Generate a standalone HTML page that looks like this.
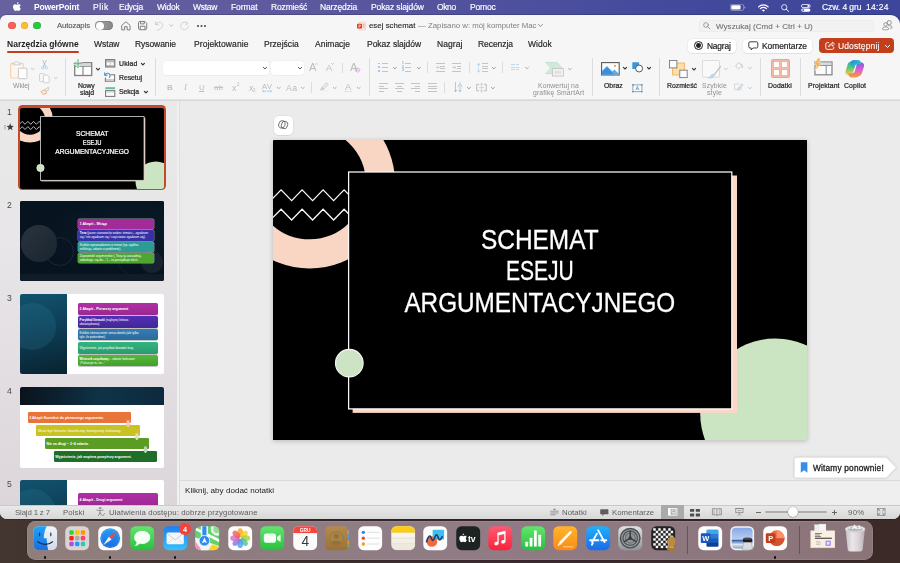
<!DOCTYPE html>
<html lang="pl">
<head>
<meta charset="utf-8">
<title>esej schemat</title>
<style>
*{box-sizing:border-box;margin:0;padding:0}
html,body{width:900px;height:563px;overflow:hidden}
body{position:relative;font-family:"Liberation Sans",sans-serif;background:#3a2a2c;color:#222}
.a{position:absolute}
.t{position:absolute;white-space:nowrap;line-height:1;will-change:transform}
svg{position:absolute;overflow:visible;will-change:transform}
#wall{left:0;top:0;width:900px;height:563px;background:linear-gradient(90deg,#43352f 0%,#3c2d2d 30%,#3a2a30 60%,#3b2a28 100%)}
#menubar{left:0;top:0;width:900px;height:26px;background:linear-gradient(90deg,#67619f 0%,#5f5a9f 30%,#4f519e 55%,#434a9c 75%,#3d469b 100%)}
#win{left:0;top:15px;width:900.2px;height:504px;background:#f6f6f6;border-radius:6px 9px 7px 7px;overflow:hidden;box-shadow:0 0 0 0.5px rgba(0,0,0,.35)}
#ribbonline{left:0;top:84.2px;width:900px;height:1.4px;background:linear-gradient(#e6e6e6,#d4d4d4)}
#leftpane{left:0;top:85.5px;width:177px;height:404.5px;background:linear-gradient(180deg,#e9e9e9 0%,#e8e6e8 35%,#e2dde1 70%,#dcd6db 100%)}
#panediv{left:177px;top:85.5px;width:3.2px;height:404.5px;background:#f1f1f1;border-right:0.6px solid #dedede}
#main{left:180.2px;top:85.5px;width:720px;height:380.5px;background:#ebebeb}
#notes{left:180.2px;top:465px;width:720px;height:25px;background:#efefef;border-top:1px solid #dadada}
#status{left:0;top:489.6px;width:900px;height:15px;background:linear-gradient(#e9e9e9 0%,#e2e2e2 40%,#d6d6d6 100%);border-top:0.8px solid #c9c9c9}
.vd{position:absolute;width:1px;background:#dadada}
.wbox{position:absolute;background:#fff;border-radius:3px;box-shadow:0 0 0 0.5px rgba(0,0,0,.07),0 0.4px 0.7px rgba(0,0,0,.05)}
.thumb{position:absolute;left:20px;width:144px;height:81px;overflow:hidden;border-radius:1.5px}
#dock{left:27.4px;top:520.8px;width:845.6px;height:38.8px;border-radius:8.5px;background:linear-gradient(90deg,#8f7e7b 0%,#8f7c80 25%,#917c86 50%,#8e7880 75%,#8b7478 100%);box-shadow:inset 0 0 0 0.5px rgba(255,255,255,.18),0 0 0 0.5px rgba(0,0,0,.25)}
.b2{left:58.4px;width:75.2px;height:10.4px;border-radius:1.6px;box-shadow:0 0 0 0.4px rgba(255,255,255,.55)}
.b3{left:58px;width:79.6px;height:11.2px;border-radius:1.8px;box-shadow:0 0.5px 0.8px rgba(0,0,0,.25)}
.b4{width:103.8px;height:10.6px;border-radius:1.2px}
.ar{width:5.6px;height:7px;clip-path:polygon(25% 0,75% 0,75% 50%,100% 50%,50% 100%,0 50%,25% 50%)}
.tt{color:#fff;font-size:3.15px;line-height:4.1px;white-space:nowrap;letter-spacing:-0.02px}
.di{position:absolute;top:526px;width:25px;height:25px;border-radius:6px;overflow:hidden}
.dot{position:absolute;top:556px;width:2.5px;height:2.5px;border-radius:50%;background:#111}
</style>
</head>
<body>
<div class="a" id="wall"></div>
<div class="a" id="menubar"></div>
<!-- apple logo -->
<svg style="left:13px;top:2.300px" width="8" height="9.800" viewBox="0 0 16 19.600"><path d="M11.200 4.700c-1.700 0-2.500 1-3.700 1-1.300 0-2.300-1-3.900-1C1.800 4.700 0 6.500 0 9.600c0 3.800 2.700 8.400 4.800 8.400 1.200 0 1.700-.8 3.300-.8 1.500 0 1.900.8 3.200.8 2 0 3.700-3.200 4.300-5-2.700-1.100-2.900-5.200 0-6.500-.9-1.200-2.500-1.800-4.400-1.800zM10.900 0C9.300.2 7.600 1.800 7.800 4c1.700.1 3.300-1.700 3.100-4z" fill="#fff"/></svg>
<!-- battery -->
<svg style="left:730.400px;top:4.300px" width="15.400" height="6.900" viewBox="0 0 30.800 13.800"><rect x="0.700" y="0.700" width="26.600" height="12.400" rx="3.600" fill="none" stroke="#fff" stroke-opacity=".5" stroke-width="1.400"/><rect x="2.600" y="2.600" width="18.500" height="8.600" rx="2" fill="#fff"/><path d="M28.800 4.600c1.300.4 1.900 1.300 1.900 2.300s-.6 1.900-1.900 2.300z" fill="#fff" fill-opacity=".55"/></svg>
<!-- wifi -->
<svg style="left:758px;top:3.500px" width="10.800" height="7.900" viewBox="0 0 21.600 15.800"><path d="M1.200 5.800a13.500 13.500 0 0 1 19.200 0M4.600 9.300a8.700 8.700 0 0 1 12.400 0" fill="none" stroke="#fff" stroke-width="2.500" stroke-linecap="round"/><path d="M7.700 12.500a4.400 4.400 0 0 1 6.200 0l-3.100 3.200z" fill="#fff"/></svg>
<!-- search -->
<svg style="left:780.600px;top:3.900px" width="8.400" height="7.800" viewBox="0 0 16.800 15.600"><circle cx="6.500" cy="6.500" r="5.300" fill="none" stroke="#fff" stroke-width="1.600"/><path d="M10.500 10.500l5 4.400" stroke="#fff" stroke-width="1.800" stroke-linecap="round"/></svg>
<!-- control center -->
<svg style="left:801px;top:3.600px" width="9.600" height="8" viewBox="0 0 19.200 16"><rect x="0.900" y="0.900" width="17.400" height="6.200" rx="3.100" fill="none" stroke="#fff" stroke-width="1.600"/><circle cx="14.600" cy="4" r="1.900" fill="#fff"/><rect x="0.400" y="8.800" width="18.400" height="6.800" rx="3.400" fill="#fff"/><circle cx="4.300" cy="12.200" r="1.900" fill="#454c9c"/></svg>

<div class="a" id="win">
<div class="a" id="ribbonline"></div>
<div class="a" id="leftpane"></div>
<div class="a" id="panediv"></div>
<div class="a" id="main"></div>
<div class="a" id="notes"></div>
<div class="a" id="status"></div>
</div>
<!-- traffic lights -->
<div class="a" style="left:8.200px;top:21.600px;width:7.600px;height:7.600px;border-radius:50%;background:#fe5f57;box-shadow:inset 0 0 0 0.400px rgba(0,0,0,.18)"></div>
<div class="a" style="left:20.600px;top:21.600px;width:7.600px;height:7.600px;border-radius:50%;background:#febc2e;box-shadow:inset 0 0 0 0.400px rgba(0,0,0,.18)"></div>
<div class="a" style="left:33px;top:21.600px;width:7.600px;height:7.600px;border-radius:50%;background:#28c840;box-shadow:inset 0 0 0 0.400px rgba(0,0,0,.18)"></div>
<!-- autosave toggle -->
<div class="a" style="left:95.300px;top:21.300px;width:17.800px;height:9.100px;border-radius:4.600px;background:linear-gradient(90deg,#a9a9a9,#858585);box-shadow:inset 0 0 0 0.500px rgba(0,0,0,.22)"></div>
<div class="a" style="left:96.100px;top:22px;width:7.700px;height:7.700px;border-radius:50%;background:#fff;box-shadow:0 0 0.800px rgba(0,0,0,.5)"></div>
<!-- home -->
<svg style="left:120.600px;top:20.600px" width="9.800" height="9.600" viewBox="0 0 19.600 19.200" fill="none" stroke="#6a6a6a" stroke-width="1.700" stroke-linejoin="round"><path d="M1.500 8.800L9.800 1.400l8.300 7.400v9H12.400v-6.400H7.200v6.400H1.500z"/></svg>
<!-- save -->
<svg style="left:138px;top:20.800px" width="9.200" height="9.200" viewBox="0 0 18.400 18.400" fill="none" stroke="#6a6a6a" stroke-width="1.700" stroke-linejoin="round"><path d="M1 3.200C1 2 2 1 3.200 1h10.600L17.400 4.600v10.600c0 1.200-1 2.200-2.200 2.200H3.200C2 17.400 1 16.400 1 15.200z"/><path d="M5 1.400v4.400h7.400V1.400M4.400 17v-6.400h9.600V17"/></svg>
<!-- undo (disabled) -->
<svg style="left:155.300px;top:20.600px" width="9" height="10" viewBox="0 0 18 20" fill="none" stroke="#c6c6c6" stroke-width="1.600" stroke-linecap="round" stroke-linejoin="round"><path d="M1.200 1.600v5.600h5.600"/><path d="M1.600 7C4 2.400 10 1 13.600 4.200c4 3.600 2.400 9.400-8.800 14.600"/></svg>
<svg style="left:169px;top:24.300px" width="4.600" height="3" viewBox="0 0 9.200 6" fill="none" stroke="#b8b8b8" stroke-width="1.600" stroke-linecap="round" stroke-linejoin="round"><path d="M1 1l3.600 3.800L8.200 1"/></svg>
<!-- redo (disabled) -->
<svg style="left:180px;top:20.800px" width="9.200" height="9.400" viewBox="0 0 18.400 18.800" fill="none" stroke="#c9c9c9" stroke-width="1.600" stroke-linecap="round" stroke-linejoin="round"><path d="M15.600 5.400A7.800 7.800 0 1 0 17 9.800"/><path d="M11.400 1l4.400 4.200-4.800 2.600"/></svg>
<!-- more -->
<div class="a" style="left:197px;top:25px;width:1.500px;height:1.500px;border-radius:50%;background:#555;box-shadow:3.500px 0 0 #555,7px 0 0 #555"></div>
<!-- doc icon -->
<svg style="left:357px;top:21.700px" width="8.600" height="8" viewBox="0 0 17.200 16"><rect x="3.600" y="0" width="13.600" height="16" rx="1.600" fill="#fbe4dc" stroke="#e9b9a8" stroke-width=".8"/><rect x="0" y="3.400" width="10" height="9.400" rx="1.200" fill="#d24726"/><path d="M3.400 5.400h2.200c2.600 0 2.600 3.400 0 3.400H4.600v2H3.400z M4.600 6.400v1.400h1c.9 0 .9-1.400 0-1.400z" fill="#fff" fill-rule="evenodd"/><path d="M11.600 4.600h3.600M11.600 7.600h3.600M11.600 10.600h3.600" stroke="#e07a5c" stroke-width="1"/></svg>
<svg style="left:538.400px;top:24.400px" width="5" height="3" viewBox="0 0 10 6" fill="none" stroke="#6a6a6a" stroke-width="1.500" stroke-linecap="round" stroke-linejoin="round"><path d="M1 1l4 3.800L9 1"/></svg>
<!-- search box -->
<div class="a" style="left:699.300px;top:19.600px;width:174.600px;height:12.900px;border-radius:3.600px;background:#f2f2f2;box-shadow:inset 0 0 0 0.600px rgba(0,0,0,.045)"></div>
<svg style="left:703px;top:22.400px" width="7.400" height="7.400" viewBox="0 0 14.800 14.800" fill="none" stroke="#7a7a7a" stroke-width="1.400" stroke-linecap="round"><circle cx="6" cy="6" r="4.700"/><path d="M9.600 9.600l4.200 4.200"/></svg>
<!-- people / share presence icon -->
<svg style="left:882px;top:20.200px" width="10.800" height="11" viewBox="0 0 21.600 22" fill="none" stroke="#7a7a7a" stroke-width="1.500"><circle cx="14.400" cy="5.200" r="4.200"/><circle cx="7.200" cy="8.800" r="3.600"/><path d="M1 18.200c0-3 2.800-4.400 6.200-4.400s6.200 1.400 6.200 4.400c0 2-12.400 2-12.400 0z"/><path d="M12.600 11.400c3.600-.6 7.800.6 7.800 3.400 0 1.200-2.200 1.800-4.400 1.900"/></svg>

<div class="a" style="left:6.900px;top:50.700px;width:72.500px;height:2.100px;border-radius:1px;background:#c43e1c"></div>
<div class="wbox" style="left:687.600px;top:38.500px;width:48.200px;height:14.200px;border-radius:3.800px"></div>
<div class="a" style="left:693.600px;top:41px;width:9.300px;height:9.300px;border-radius:50%;border:1.100px solid #1f1f1f"></div>
<div class="a" style="left:695.800px;top:43.200px;width:4.900px;height:4.900px;border-radius:50%;background:#1f1f1f"></div>
<div class="wbox" style="left:743px;top:38.500px;width:69px;height:14.200px;border-radius:3.800px"></div>
<svg style="left:748.2px;top:41.3px" width="10.6" height="9.4" viewBox="0 0 10.6 9.4" ><path d="M2 0.800h6.600c.7 0 1.200.5 1.200 1.200v3.800c0 .7-.5 1.200-1.200 1.200H5.200L3.200 8.800V7H2C1.300 7 .8 6.500.8 5.800V2C.8 1.300 1.300.8 2 .8z" fill="none" stroke="#2a2a2a" stroke-width="0.900" stroke-linejoin="round"/></svg>
<div class="a" style="left:818.700px;top:38px;width:75.200px;height:15.200px;border-radius:4px;background:#c43e1c"></div>
<svg style="left:825px;top:41.2px" width="10" height="9.2" viewBox="0 0 10 9.2" ><path d="M3.600 1.600H2.200C1.400 1.600.800 2.200.800 3v4c0 .8.600 1.400 1.400 1.400h5.200c.8 0 1.400-.6 1.400-1.400V6.200" fill="none" stroke="#fff" stroke-width="0.900" stroke-linecap="round"/><path d="M3.600 6c.2-2.200 1.600-3.400 3.800-3.400V.900L9.600 3.100 7.400 5.300V3.800C5.800 3.800 4.600 4.400 3.600 6z" fill="none" stroke="#fff" stroke-width="0.800" stroke-linejoin="round"/></svg>
<svg style="left:884.50px;top:44.70px" width="5" height="2.8" viewBox="0 0 5 2.8" fill="none" stroke="#fff" stroke-width="1" stroke-linecap="round" stroke-linejoin="round"><path d="M0.400 0.400L2.5 2.4L4.6 0.400"/></svg>
<svg style="left:10.4px;top:59.6px" width="17.6" height="19.4" viewBox="0 0 17.6 19.4" ><rect x="0.700" y="3.400" width="12.600" height="14.600" rx="1" fill="#fdf6ee" stroke="#f7d3ad" stroke-width="1.100"/>
<path d="M3 4.800V3.200h1.600C4.800 1 8.800 1 9 3.200h1.600v1.600z" fill="#f4f4f4" stroke="#c9c9c9" stroke-width="0.800"/>
<rect x="8.400" y="8.200" width="8.600" height="10.500" rx="0.800" fill="#fdfdfd" stroke="#c4c4c4" stroke-width="0.900"/></svg>
<svg style="left:30.80px;top:68.20px" width="3.6" height="2" viewBox="0 0 3.6 2" fill="none" stroke="#c0c0c0" stroke-width="0.9" stroke-linecap="round" stroke-linejoin="round"><path d="M0.400 0.400L1.8 1.6L3.2 0.400"/></svg>
<svg style="left:41px;top:59.6px" width="7" height="9.6" viewBox="0 0 7 9.6" ><path d="M1.800 0.400L4.600 6.600M5.200 0.400L2.400 6.600" stroke="#b4b4b4" stroke-width="0.800" stroke-linecap="round"/><circle cx="1.700" cy="7.800" r="1.200" fill="none" stroke="#a4cbea" stroke-width="0.800"/><circle cx="5.300" cy="7.800" r="1.200" fill="none" stroke="#a4cbea" stroke-width="0.800"/></svg>
<svg style="left:39.4px;top:72.6px" width="10.8" height="10.2" viewBox="0 0 10.8 10.2" ><path d="M0.600 1.400c0-.5.400-.8.800-.8h3.400L6.400 2.200v5.600c0 .4-.3.800-.8.800H1.400c-.4 0-.8-.4-.8-.8z" fill="#f8f8f8" stroke="#c6c6c6" stroke-width="0.800"/><path d="M4.400 2.800c0-.5.400-.8.800-.8h3L10.200 4v5c0 .4-.3.800-.8.800H5.200c-.4 0-.8-.4-.8-.8z" fill="#fbfbfb" stroke="#c6c6c6" stroke-width="0.800"/></svg>
<svg style="left:53.60px;top:77.00px" width="3.6" height="2" viewBox="0 0 3.6 2" fill="none" stroke="#c0c0c0" stroke-width="0.9" stroke-linecap="round" stroke-linejoin="round"><path d="M0.400 0.400L1.8 1.6L3.2 0.400"/></svg>
<svg style="left:40px;top:86.2px" width="10" height="9" viewBox="0 0 10 9" ><path d="M0.800 5.600L4.600 3.600 6.800 7.200 3 8.600z" fill="#fbe3d2" stroke="#f2a97c" stroke-width="0.800" stroke-linejoin="round"/><path d="M5 3.400L7.800 1.600l1.200 2L6.200 5.400z" fill="#f2f2f2" stroke="#bcbcbc" stroke-width="0.700"/><path d="M8.400 1.800L9.400.6" stroke="#bcbcbc" stroke-width="0.800"/></svg>
<div class="a" style="left:65.20px;top:57.5px;width:0.900px;height:38.0px;background:#dcdcdc"></div>
<svg style="left:73px;top:58.8px" width="20" height="17.4" viewBox="0 0 20 17.4" ><rect x="1.700" y="3.700" width="17" height="12.800" fill="#fdfdfd" stroke="#808080" stroke-width="1.300"/><path d="M1.700 7.200h17M10 7.200v9" stroke="#808080" stroke-width="1.100"/><rect x="2.400" y="4.400" width="15.600" height="2.300" fill="#d6d6d6"/><path d="M5 0.200v9M0.400 4.800h9.200" stroke="#f6f6f6" stroke-width="2.600"/><path d="M5 0.200v9M0.400 4.800h9.200" stroke="#33b566" stroke-width="0.950"/></svg>
<svg style="left:96.00px;top:68.10px" width="4" height="2.4" viewBox="0 0 4 2.4" fill="none" stroke="#3a3a3a" stroke-width="1.1" stroke-linecap="round" stroke-linejoin="round"><path d="M0.400 0.400L2.0 2.0L3.6 0.400"/></svg>
<svg style="left:104.8px;top:59.2px" width="10.4" height="8.6" viewBox="0 0 10.4 8.6" ><rect x="0.600" y="0.600" width="9.200" height="7.400" fill="#bdbdbd" stroke="#7c7c7c" stroke-width="1.100"/><rect x="1.800" y="3.400" width="2.900" height="2.600" fill="#fff"/><rect x="5.700" y="3.400" width="2.900" height="2.600" fill="#fff"/></svg>
<svg style="left:141.10px;top:63.15px" width="3.8" height="2.3" viewBox="0 0 3.8 2.3" fill="none" stroke="#333" stroke-width="1.2" stroke-linecap="round" stroke-linejoin="round"><path d="M0.400 0.400L1.9 1.9L3.4 0.400"/></svg>
<svg style="left:104.0px;top:72.0px" width="11.4" height="9.8" viewBox="0 0 11.4 9.8" ><rect x="1.400" y="2.800" width="9.200" height="6.400" fill="#fdfdfd" stroke="#7c7c7c" stroke-width="1.100"/><rect x="2" y="7" width="8" height="1.700" fill="#c9c9c9"/><rect x="0" y="0" width="6.200" height="5.600" fill="#f6f6f6"/><path d="M1.200 3C2 0.900 4.800 0.600 5.800 2.600c.4.900.3 1.900-.3 2.800" fill="none" stroke="#3a96dd" stroke-width="1.100" stroke-linecap="round"/><path d="M0.600 0.800v2.500h2.500" fill="none" stroke="#3a96dd" stroke-width="1" stroke-linecap="round" stroke-linejoin="round"/></svg>
<svg style="left:104.8px;top:86.6px" width="10.4" height="10" viewBox="0 0 10.4 10" ><rect x="0.300" y="0.200" width="9.800" height="2" fill="#62c28e"/><rect x="0.600" y="3.600" width="9.200" height="5.800" fill="#fdfdfd" stroke="#7c7c7c" stroke-width="1.100"/><rect x="1.200" y="4.200" width="8" height="1.300" fill="#cfcfcf"/></svg>
<svg style="left:143.50px;top:90.85px" width="3.8" height="2.3" viewBox="0 0 3.8 2.3" fill="none" stroke="#333" stroke-width="1.2" stroke-linecap="round" stroke-linejoin="round"><path d="M0.400 0.400L1.9 1.9L3.4 0.400"/></svg>
<div class="a" style="left:155.40px;top:57.5px;width:0.900px;height:38.0px;background:#dcdcdc"></div>
<div class="wbox" style="left:162.600px;top:60.800px;width:106.400px;height:13.900px;border-radius:3px;box-shadow:0 0 0 0.5px rgba(0,0,0,.045),0 0.4px 0.6px rgba(0,0,0,.04)"></div>
<div class="wbox" style="left:271.100px;top:60.800px;width:33px;height:13.900px;border-radius:3px;box-shadow:0 0 0 0.5px rgba(0,0,0,.045),0 0.4px 0.6px rgba(0,0,0,.04)"></div>
<svg style="left:262.60px;top:66.65px" width="4" height="2.3" viewBox="0 0 4 2.3" fill="none" stroke="#444" stroke-width="0.95" stroke-linecap="round" stroke-linejoin="round"><path d="M0.400 0.400L2.0 1.9L3.6 0.400"/></svg>
<svg style="left:297.70px;top:66.65px" width="4" height="2.3" viewBox="0 0 4 2.3" fill="none" stroke="#444" stroke-width="0.95" stroke-linecap="round" stroke-linejoin="round"><path d="M0.400 0.400L2.0 1.9L3.6 0.400"/></svg>
<svg style="left:315.2px;top:63.3px" width="3.2" height="1.8" viewBox="0 0 3.2 1.8" ><path d="M0.400 1.400L1.600 0.400L2.800 1.400" fill="none" stroke="#8ec0ea" stroke-width="0.700" stroke-linecap="round" stroke-linejoin="round"/></svg>
<svg style="left:331.4px;top:63.4px" width="3.2" height="1.8" viewBox="0 0 3.2 1.8" ><path d="M0.400 0.400L1.600 1.400L2.800 0.400" fill="none" stroke="#8ec0ea" stroke-width="0.700" stroke-linecap="round" stroke-linejoin="round"/></svg>
<div class="a" style="left:342.10px;top:62.6px;width:0.900px;height:10.2px;background:#dcdcdc"></div>
<svg style="left:354px;top:66.6px" width="7" height="6" viewBox="0 0 7 6" ><path d="M2.800 0.600L6.200 2.400 4.200 5.400 0.800 3.600z" fill="#fbf2fc" stroke="#d9a3e2" stroke-width="0.800" stroke-linejoin="round"/><path d="M2 1.900L5.400 3.700" stroke="#d9a3e2" stroke-width="0.600"/></svg>
<div class="a" style="left:368.70px;top:57.5px;width:0.900px;height:38.0px;background:#dcdcdc"></div>
<svg style="left:276.60px;top:87.20px" width="3.6" height="2" viewBox="0 0 3.6 2" fill="none" stroke="#a8a8a8" stroke-width="0.9" stroke-linecap="round" stroke-linejoin="round"><path d="M0.400 0.400L1.8 1.6L3.2 0.400"/></svg>
<svg style="left:300.70px;top:87.20px" width="3.6" height="2" viewBox="0 0 3.6 2" fill="none" stroke="#a8a8a8" stroke-width="0.9" stroke-linecap="round" stroke-linejoin="round"><path d="M0.400 0.400L1.8 1.6L3.2 0.400"/></svg>
<div class="a" style="left:310.80px;top:82.2px;width:0.900px;height:10.8px;background:#dcdcdc"></div>
<svg style="left:262.4px;top:89.6px" width="10.2" height="2.4" viewBox="0 0 10.2 2.4" ><path d="M0.800 1.200h8.600M2 0.300L0.600 1.200 2 2.100M8.200 0.300L9.600 1.200 8.200 2.100" fill="none" stroke="#8ec0ea" stroke-width="0.600" stroke-linecap="round" stroke-linejoin="round"/></svg>
<svg style="left:320px;top:82.4px" width="8.8" height="8.6" viewBox="0 0 8.8 8.6" ><path d="M2 5.600L6.600 0.800 8.200 2.400 3.600 7z" fill="#f2f2f2" stroke="#b6b6b6" stroke-width="0.700" stroke-linejoin="round"/><path d="M2 5.600L0.600 7.800 3.600 7z" fill="#d8d8d8" stroke="#b6b6b6" stroke-width="0.600" stroke-linejoin="round"/><path d="M0 8.300h6.400" stroke="#e4e4e4" stroke-width="0.800"/></svg>
<svg style="left:333.30px;top:87.20px" width="3.6" height="2" viewBox="0 0 3.6 2" fill="none" stroke="#a8a8a8" stroke-width="0.9" stroke-linecap="round" stroke-linejoin="round"><path d="M0.400 0.400L1.8 1.6L3.2 0.400"/></svg>
<div class="a" style="left:343.600px;top:91.100px;width:8.600px;height:1px;background:#e2e2e2"></div>
<svg style="left:357.20px;top:87.20px" width="3.6" height="2" viewBox="0 0 3.6 2" fill="none" stroke="#a8a8a8" stroke-width="0.9" stroke-linecap="round" stroke-linejoin="round"><path d="M0.400 0.400L1.8 1.6L3.2 0.400"/></svg>
<div class="a" style="left:378.400px;top:62.60px;width:1.800px;height:1.800px;background:#a3c9ee"></div>
<div class="a" style="left:378.400px;top:66.40px;width:1.800px;height:1.800px;background:#a3c9ee"></div>
<div class="a" style="left:378.400px;top:70.20px;width:1.800px;height:1.800px;background:#a3c9ee"></div>
<div class="a" style="left:381.60px;top:62.90px;width:6.4px;height:1.2px;background:#c4c4c4"></div>
<div class="a" style="left:381.60px;top:66.70px;width:6.4px;height:1.2px;background:#c4c4c4"></div>
<div class="a" style="left:381.60px;top:70.50px;width:6.4px;height:1.2px;background:#c4c4c4"></div>
<svg style="left:392.90px;top:66.70px" width="3.8" height="2.2" viewBox="0 0 3.8 2.2" fill="none" stroke="#8e8e8e" stroke-width="0.9" stroke-linecap="round" stroke-linejoin="round"><path d="M0.400 0.400L1.9 1.8000000000000003L3.4 0.400"/></svg>
<span class="t" style="left:401.900px;top:61.70px;font-size:3.400px;color:#74aee6;font-weight:700">1</span>
<span class="t" style="left:401.900px;top:65.50px;font-size:3.400px;color:#74aee6;font-weight:700">2</span>
<span class="t" style="left:401.900px;top:69.30px;font-size:3.400px;color:#74aee6;font-weight:700">3</span>
<div class="a" style="left:405.30px;top:62.90px;width:6px;height:1.2px;background:#c4c4c4"></div>
<div class="a" style="left:405.30px;top:66.70px;width:6px;height:1.2px;background:#c4c4c4"></div>
<div class="a" style="left:405.30px;top:70.50px;width:6px;height:1.2px;background:#c4c4c4"></div>
<svg style="left:416.50px;top:66.70px" width="3.8" height="2.2" viewBox="0 0 3.8 2.2" fill="none" stroke="#8e8e8e" stroke-width="0.9" stroke-linecap="round" stroke-linejoin="round"><path d="M0.400 0.400L1.9 1.8000000000000003L3.4 0.400"/></svg>
<div class="a" style="left:427.30px;top:62.3px;width:0.900px;height:10.7px;background:#dcdcdc"></div>
<div class="a" style="left:435.70px;top:63.00px;width:9px;height:1px;background:#c4c4c4"></div>
<div class="a" style="left:440.30px;top:65.60px;width:4.4px;height:1px;background:#c4c4c4"></div>
<div class="a" style="left:440.30px;top:68.00px;width:4.4px;height:1px;background:#c4c4c4"></div>
<div class="a" style="left:435.70px;top:70.60px;width:9px;height:1px;background:#c4c4c4"></div>
<svg style="left:435.8px;top:65.9px" width="4.4" height="2.8" viewBox="0 0 4.4 2.8" ><path d="M4 1.400H0.800M2 0.300L0.600 1.400 2 2.500" fill="none" stroke="#a3c9ee" stroke-width="0.700" stroke-linecap="round" stroke-linejoin="round"/></svg>
<div class="a" style="left:452.00px;top:63.00px;width:9px;height:1px;background:#c4c4c4"></div>
<div class="a" style="left:456.60px;top:65.60px;width:4.4px;height:1px;background:#c4c4c4"></div>
<div class="a" style="left:456.60px;top:68.00px;width:4.4px;height:1px;background:#c4c4c4"></div>
<div class="a" style="left:452.00px;top:70.60px;width:9px;height:1px;background:#c4c4c4"></div>
<svg style="left:452.1px;top:65.9px" width="4.4" height="2.8" viewBox="0 0 4.4 2.8" ><path d="M0.400 1.400h3.200M2.400 0.300L3.800 1.400 2.400 2.500" fill="none" stroke="#a3c9ee" stroke-width="0.700" stroke-linecap="round" stroke-linejoin="round"/></svg>
<div class="a" style="left:469.20px;top:62.3px;width:0.900px;height:10.7px;background:#dcdcdc"></div>
<svg style="left:477.2px;top:62.6px" width="3.2" height="9.6" viewBox="0 0 3.2 9.6" ><path d="M1.600 0.600v3.200M0.400 1.800L1.600.5 2.800 1.800M1.600 9v-3.200M0.400 7.800L1.600 9.100 2.800 7.800" fill="none" stroke="#a3c9ee" stroke-width="0.700" stroke-linecap="round" stroke-linejoin="round"/></svg>
<div class="a" style="left:481.60px;top:63.00px;width:6px;height:1px;background:#c4c4c4"></div>
<div class="a" style="left:481.60px;top:65.50px;width:6px;height:1px;background:#c4c4c4"></div>
<div class="a" style="left:481.60px;top:68.10px;width:6px;height:1px;background:#c4c4c4"></div>
<div class="a" style="left:481.60px;top:70.60px;width:6px;height:1px;background:#c4c4c4"></div>
<svg style="left:491.70px;top:66.70px" width="3.8" height="2.2" viewBox="0 0 3.8 2.2" fill="none" stroke="#8e8e8e" stroke-width="0.9" stroke-linecap="round" stroke-linejoin="round"><path d="M0.400 0.400L1.9 1.8000000000000003L3.4 0.400"/></svg>
<div class="a" style="left:502.20px;top:62.3px;width:0.900px;height:10.7px;background:#dcdcdc"></div>
<div class="a" style="left:511.400px;top:64.30px;width:3.200px;height:1.200px;background:#bcdaf5"></div>
<div class="a" style="left:515.800px;top:64.30px;width:3.200px;height:1.200px;background:#bcdaf5"></div>
<div class="a" style="left:511.400px;top:66.70px;width:3.200px;height:1.200px;background:#bcdaf5"></div>
<div class="a" style="left:515.800px;top:66.70px;width:3.200px;height:1.200px;background:#bcdaf5"></div>
<div class="a" style="left:511.400px;top:69.10px;width:3.200px;height:1.200px;background:#bcdaf5"></div>
<div class="a" style="left:515.800px;top:69.10px;width:3.200px;height:1.200px;background:#bcdaf5"></div>
<svg style="left:524.50px;top:66.70px" width="3.8" height="2.2" viewBox="0 0 3.8 2.2" fill="none" stroke="#a8a8a8" stroke-width="0.9" stroke-linecap="round" stroke-linejoin="round"><path d="M0.400 0.400L1.9 1.8000000000000003L3.4 0.400"/></svg>
<div class="a" style="left:379.00px;top:83.20px;width:9.1px;height:1px;background:#c4c4c4"></div>
<div class="a" style="left:379.00px;top:85.60px;width:5.4px;height:1px;background:#c4c4c4"></div>
<div class="a" style="left:379.00px;top:88.10px;width:9.1px;height:1px;background:#c4c4c4"></div>
<div class="a" style="left:379.00px;top:90.50px;width:5.4px;height:1px;background:#c4c4c4"></div>
<div class="a" style="left:395.30px;top:83.20px;width:9.1px;height:1px;background:#c4c4c4"></div>
<div class="a" style="left:397.10px;top:85.60px;width:5.4px;height:1px;background:#c4c4c4"></div>
<div class="a" style="left:395.30px;top:88.10px;width:9.1px;height:1px;background:#c4c4c4"></div>
<div class="a" style="left:397.10px;top:90.50px;width:5.4px;height:1px;background:#c4c4c4"></div>
<div class="a" style="left:411.20px;top:83.20px;width:9.1px;height:1px;background:#c4c4c4"></div>
<div class="a" style="left:414.80px;top:85.60px;width:5.4px;height:1px;background:#c4c4c4"></div>
<div class="a" style="left:411.20px;top:88.10px;width:9.1px;height:1px;background:#c4c4c4"></div>
<div class="a" style="left:414.80px;top:90.50px;width:5.4px;height:1px;background:#c4c4c4"></div>
<div class="a" style="left:427.50px;top:83.20px;width:9.1px;height:1px;background:#c4c4c4"></div>
<div class="a" style="left:427.50px;top:85.60px;width:9.1px;height:1px;background:#c4c4c4"></div>
<div class="a" style="left:427.50px;top:88.10px;width:9.1px;height:1px;background:#c4c4c4"></div>
<div class="a" style="left:427.50px;top:90.50px;width:9.1px;height:1px;background:#c4c4c4"></div>
<div class="a" style="left:444.40px;top:82.2px;width:0.900px;height:10.8px;background:#dcdcdc"></div>
<svg style="left:454px;top:82.4px" width="8.8" height="10.4" viewBox="0 0 8.8 10.4" ><path d="M1.500 0.400v9.200M0.300 8.200l1.200 1.600 1.200-1.600M6 5v4.600M4.800 8.200L6 9.800l1.200-1.600" fill="none" stroke="#b0b0b0" stroke-width="0.700" stroke-linecap="round" stroke-linejoin="round"/><path d="M4.200 5L6 0.600 7.800 5M4.900 3.500h2.200" fill="none" stroke="#a3c9ee" stroke-width="0.700" stroke-linecap="round" stroke-linejoin="round"/></svg>
<svg style="left:467.20px;top:87.10px" width="3.8" height="2.2" viewBox="0 0 3.8 2.2" fill="none" stroke="#8e8e8e" stroke-width="0.9" stroke-linecap="round" stroke-linejoin="round"><path d="M0.400 0.400L1.9 1.8000000000000003L3.4 0.400"/></svg>
<svg style="left:476.4px;top:82.8px" width="11" height="9.2" viewBox="0 0 11 9.2" ><path d="M3 1.400H0.700v6.400H3M8 1.400h2.300v6.400H8" fill="none" stroke="#b0b0b0" stroke-width="0.800"/><path d="M3 4.600h5" stroke="#c8c8c8" stroke-width="0.800"/><path d="M5.500 0.300v3M4.500 1.300L5.500.2l1 1.100M5.500 8.900v-3M4.500 7.900l1 1.100 1-1.100" fill="none" stroke="#a3c9ee" stroke-width="0.700" stroke-linecap="round" stroke-linejoin="round"/></svg>
<svg style="left:491.10px;top:87.10px" width="3.8" height="2.2" viewBox="0 0 3.8 2.2" fill="none" stroke="#8e8e8e" stroke-width="0.9" stroke-linecap="round" stroke-linejoin="round"><path d="M0.400 0.400L1.9 1.8000000000000003L3.4 0.400"/></svg>
<svg style="left:545px;top:61.6px" width="19" height="14.6" viewBox="0 0 19 14.6" ><path d="M0.400 0.300h11.600l5.200 5.700-5.200 5.700H0.400l5.200-5.700z" fill="#cfeada" stroke="#b5dcc2" stroke-width="0.600"/><rect x="7.400" y="6.600" width="11" height="7.400" fill="#f4f4f4" stroke="#c2c2c2" stroke-width="0.900"/><rect x="9.400" y="8.600" width="7" height="3.400" fill="#e2e2e2"/></svg>
<svg style="left:567.90px;top:67.60px" width="3.8" height="2.2" viewBox="0 0 3.8 2.2" fill="none" stroke="#a8a8a8" stroke-width="0.9" stroke-linecap="round" stroke-linejoin="round"><path d="M0.400 0.400L1.9 1.8000000000000003L3.4 0.400"/></svg>
<div class="a" style="left:592.20px;top:57.5px;width:0.900px;height:38.0px;background:#dcdcdc"></div>
<svg style="left:601px;top:61.8px" width="18.8" height="13.6" viewBox="0 0 18.8 13.6" ><rect x="0.600" y="0.600" width="17.600" height="12.400" fill="#fdfdfd" stroke="#5a5a5a" stroke-width="1.100"/><path d="M1.200 12.400V8.800L6 4l5.400 5.400 2-2 4.200 4.200v0.800z" fill="#5aaae8"/><path d="M1.200 12.400V9.600L6 5.200l7.200 7.200z" fill="#3a8fdc"/><circle cx="14" cy="3.800" r="1.100" fill="#f59a3c"/></svg>
<svg style="left:623.10px;top:67.30px" width="4" height="2.4" viewBox="0 0 4 2.4" fill="none" stroke="#3a3a3a" stroke-width="1.1" stroke-linecap="round" stroke-linejoin="round"><path d="M0.400 0.400L2.0 2.0L3.6 0.400"/></svg>
<svg style="left:632.3px;top:62.4px" width="11.2" height="10.8" viewBox="0 0 11.2 10.8" ><rect x="0.300" y="0.300" width="6.800" height="6.800" rx="0.600" fill="#3a96dd"/><circle cx="7.100" cy="6.500" r="3.500" fill="#fdfdfd" stroke="#4a4a4a" stroke-width="0.900"/></svg>
<svg style="left:647.20px;top:66.60px" width="4" height="2.4" viewBox="0 0 4 2.4" fill="none" stroke="#3a3a3a" stroke-width="1.1" stroke-linecap="round" stroke-linejoin="round"><path d="M0.400 0.400L2.0 2.0L3.6 0.400"/></svg>
<svg style="left:632.4px;top:83.6px" width="10.8" height="8.6" viewBox="0 0 10.8 8.6" ><rect x="0.900" y="0.900" width="9" height="6.800" fill="#fdfdfd" stroke="#8a8a8a" stroke-width="0.800"/><path d="M3.800 6.200L5.400 2.200 7 6.200M4.400 4.900h2" fill="none" stroke="#3a96dd" stroke-width="0.700" stroke-linejoin="round"/><g fill="#3a96dd"><circle cx="0.900" cy="0.900" r="0.800"/><circle cx="9.900" cy="0.900" r="0.800"/><circle cx="0.900" cy="7.700" r="0.800"/><circle cx="9.900" cy="7.700" r="0.800"/></g></svg>
<div class="a" style="left:658.90px;top:57.5px;width:0.900px;height:38.0px;background:#dcdcdc"></div>
<svg style="left:669.2px;top:59.8px" width="18.6" height="18" viewBox="0 0 18.6 18" ><rect x="3.600" y="3" width="12" height="12" fill="#fbdfa6" stroke="#f3b26a" stroke-width="0.900"/><rect x="0.500" y="0.500" width="7.400" height="7.400" fill="#fdfdfd" stroke="#7a7a7a" stroke-width="0.900"/><rect x="10.800" y="10.200" width="7.400" height="7.400" fill="#fdfdfd" stroke="#7a7a7a" stroke-width="0.900"/></svg>
<svg style="left:691.50px;top:67.80px" width="4" height="2.4" viewBox="0 0 4 2.4" fill="none" stroke="#3a3a3a" stroke-width="1.1" stroke-linecap="round" stroke-linejoin="round"><path d="M0.400 0.400L2.0 2.0L3.6 0.400"/></svg>
<svg style="left:702.2px;top:60px" width="19.4" height="19.6" viewBox="0 0 19.4 19.6" ><rect x="0.400" y="0.400" width="17.200" height="16.800" rx="1" fill="#f9f9f9" stroke="#d2d2d2" stroke-width="0.800"/><path d="M18.600 6.400L12 15" stroke="#c4c4c4" stroke-width="1.300" stroke-linecap="round"/><path d="M12.400 14.200c-1.400-1.200-3.600-.2-4 1.400-.4 1.400-1.600 2-3 2.400 3 1.400 7.400.2 7-3.800z" fill="#b9d6ef"/></svg>
<svg style="left:724.30px;top:67.50px" width="3.8" height="2.2" viewBox="0 0 3.8 2.2" fill="none" stroke="#c0c0c0" stroke-width="0.9" stroke-linecap="round" stroke-linejoin="round"><path d="M0.400 0.400L1.9 1.8000000000000003L3.4 0.400"/></svg>
<svg style="left:734.8px;top:62.4px" width="8.6" height="8" viewBox="0 0 8.6 8" ><path d="M3.600 0.700L6.800 3.900 3.600 7.100 0.600 4z" fill="#f8f8f8" stroke="#c2c2c2" stroke-width="0.800" stroke-linejoin="round"/><path d="M7.400 3.600c.8 1.200 1 2 .2 2.400-.8.200-1-.8-.2-2.400z" fill="#a9cdee"/><path d="M6 1.400l1.400 2" stroke="#a9cdee" stroke-width="0.700"/></svg>
<svg style="left:748.10px;top:66.70px" width="3.8" height="2.2" viewBox="0 0 3.8 2.2" fill="none" stroke="#c0c0c0" stroke-width="0.9" stroke-linecap="round" stroke-linejoin="round"><path d="M0.400 0.400L1.9 1.8000000000000003L3.4 0.400"/></svg>
<svg style="left:734.3px;top:82.8px" width="9.6" height="7.6" viewBox="0 0 9.6 7.6" ><path d="M5.400 1H0.600v5.800h6.600V4.400" fill="none" stroke="#cfcfcf" stroke-width="0.800"/><path d="M3.600 5.600L8.200 0.800 9.200 1.800 4.600 6.400 3.200 6.800z" fill="#cfe3f5" stroke="#a9cdee" stroke-width="0.600" stroke-linejoin="round"/></svg>
<svg style="left:748.10px;top:86.60px" width="3.8" height="2.2" viewBox="0 0 3.8 2.2" fill="none" stroke="#c0c0c0" stroke-width="0.9" stroke-linecap="round" stroke-linejoin="round"><path d="M0.400 0.400L1.9 1.8000000000000003L3.4 0.400"/></svg>
<div class="a" style="left:760.10px;top:57.5px;width:0.900px;height:38.0px;background:#dcdcdc"></div>
<svg style="left:770.5px;top:59.2px" width="19" height="19" viewBox="0 0 19 19" ><rect x="0.500" y="0.500" width="18" height="18" rx="1.200" fill="#f6b9a8" stroke="#ec9c84" stroke-width="0.900"/><g fill="#fdfdfd" stroke="#ee9f88" stroke-width="0.600"><rect x="2.600" y="2.600" width="5.800" height="5.800"/><rect x="10.600" y="2.600" width="5.800" height="5.800"/><rect x="2.600" y="10.600" width="5.800" height="5.800"/><rect x="10.600" y="10.600" width="5.800" height="5.800"/></g></svg>
<div class="a" style="left:800.20px;top:57.5px;width:0.900px;height:38.0px;background:#dcdcdc"></div>
<svg style="left:812.8px;top:58.2px" width="20" height="17.6" viewBox="0 0 20 17.6" ><rect x="2" y="4" width="17" height="12.800" fill="#fbfbfb" stroke="#8a8a8a" stroke-width="1.300"/><path d="M2.600 7.400h16M13.200 7.400v9" stroke="#8a8a8a" stroke-width="1"/><rect x="2.700" y="4.700" width="15.600" height="2.300" fill="#d9d9d9"/><path d="M4.600 0.200L1 7h2.800L2.200 12.800 8.600 4.800H5.400L8 0.200z" fill="#f9b04e" stroke="#f6f6f6" stroke-width="0.500"/></svg>
<svg style="left:845.4px;top:59.8px" width="19.6" height="17.6" viewBox="0 0 19.6 17.6" ><defs><linearGradient id="cpA" x1="0" y1="0" x2="1" y2="1"><stop offset="0" stop-color="#2a7de8"/><stop offset=".5" stop-color="#28b8c8"/><stop offset="1" stop-color="#5ad05a"/></linearGradient><linearGradient id="cpB" x1="0" y1="0" x2="0" y2="1"><stop offset="0" stop-color="#7a5af0"/><stop offset=".5" stop-color="#e060c8"/><stop offset="1" stop-color="#f89a3c"/></linearGradient><linearGradient id="cpC" x1="0" y1="0" x2="0" y2="1"><stop offset="0" stop-color="#28a0e8"/><stop offset=".45" stop-color="#4ac878"/><stop offset="1" stop-color="#f8d040"/></linearGradient></defs>
<path d="M6.200 1.200C7 .500 8 .200 9 .200h4c1.600 0 2.600 1 3 2.400l.4 1.600h-3.800c-1.400 0-2.400.8-2.800 2.200L8 12.600c-.4 1.400-1.600 2.400-3 2.400H3.400C1.400 15 0 13.200.600 11.200L2.800 4C3.400 2.400 4.600 1.600 6.200 1.200z" fill="url(#cpC)"/>
<path d="M13.400 16.400c-.8.700-1.800 1-2.800 1h-4c-1.600 0-2.600-1-3-2.400L3.200 13.400H7c1.400 0 2.400-.8 2.800-2.200l1.800-6.200c.4-1.400 1.600-2.400 3-2.400h1.600c2 0 3.400 1.800 2.800 3.800L16.800 13.600c-.6 1.600-1.800 2.400-3.400 2.800z" fill="url(#cpB)"/>
<path d="M6.200 1.200C7 .500 8 .200 9 .200h4c1.600 0 2.600 1 3 2.400l.4 1.600h-3.800c-1.400 0-2.400.8-2.800 2.200L9 8.400 6 6z" fill="url(#cpA)" fill-opacity=".9"/></svg>

<!-- selected border -->
<div class="a" style="left:17.6px;top:105.3px;width:148.8px;height:85.1px;border-radius:4.5px;background:#c4482c"></div>
<!-- thumb 1 -->
<svg style="left:20px;top:107.6px;overflow:hidden;border-radius:2px" width="144.4" height="80.8" viewBox="273.3 140 534 300.4" preserveAspectRatio="none">
<rect x="273" y="140" width="535" height="301" fill="#000"/>
<circle cx="310" cy="183.2" r="70.75" fill="none" stroke="#f9d5c4" stroke-width="29.3"/>
<circle cx="775.5" cy="413.5" r="75" fill="#cbe5c2"/>
<polyline fill="none" stroke="#e2e2e2" stroke-width="3" points="270.8,200.6 281.4,189.8 291.9,200.6 302.4,189.8 312.9,200.6 323.4,189.8 333.9,200.6 344.4,189.8 354.9,200.6"/>
<polyline fill="none" stroke="#e2e2e2" stroke-width="3" points="270.8,220 281.4,209.2 291.9,220 302.4,209.2 312.9,220 323.4,209.2 333.9,220 344.4,209.2 354.9,220"/>
<rect x="352" y="175.5" width="384.6" height="237.2" fill="#fad7c6"/>
<rect x="348.9" y="172" width="383.2" height="236.9" fill="#000" stroke="#d8d8d8" stroke-width="3"/>
<circle cx="349" cy="362.8" r="13.8" fill="#cde4c4" stroke="#f4f4f4" stroke-width="2"/>
<g fill="#fff" font-family="Liberation Sans, sans-serif" font-size="27" text-anchor="middle" stroke="#fff" stroke-width="0.9">
<text x="540.1" y="245.8" textLength="119" lengthAdjust="spacingAndGlyphs">SCHEMAT</text>
<text x="540.1" y="278.8" textLength="69" lengthAdjust="spacingAndGlyphs">ESEJU</text>
<text x="540.1" y="311.8" textLength="272" lengthAdjust="spacingAndGlyphs">ARGUMENTACYJNEGO</text>
</g>
</svg>
<!-- animation star -->
<svg style="left:3.7px;top:123.2px" width="10.2" height="8.3" viewBox="0 0 11 9"><path d="M6.7 0.400l1.050 2.700 2.850.15-2.200 1.800.75 2.800-2.450-1.600-2.450 1.600.75-2.800-2.200-1.800 2.850-.15z" fill="#3c3c3c"/><path d="M0.300 2.800h1.500M0.300 4.600h1.500M0.300 6.400h1.500" stroke="#555" stroke-width="0.6"/></svg>

<!-- thumb 2 -->
<div class="thumb" style="top:201px;width:144.4px;height:80.4px;background:#07131f;border-radius:2px">
<div class="a" style="left:0;top:0;width:144px;height:81px;background:radial-gradient(ellipse at 80% 40%,#0b1b2a 0%,#07131f 60%)"></div>
<div class="a" style="left:0;top:73px;width:144.400px;height:8px;background:rgba(255,255,255,.04)"></div>
<div class="a" style="left:0.500px;top:24px;width:36.500px;height:36.500px;border-radius:50%;background:linear-gradient(135deg,#2a333d,#1a2530)"></div>
<div class="a" style="left:25px;top:36px;width:29px;height:29px;border-radius:50%;border:0.600px solid #1b2a37"></div>
<div class="a" style="left:121px;top:50px;width:22px;height:22px;border-radius:50%;background:#172330"></div>
<div class="a" style="left:97px;top:36px;width:40px;height:40px;border-radius:50%;border:0.500px solid #15222e"></div>
<div class="a b2" style="top:17.600px;background:#a32b99"></div>
<div class="a b2" style="top:29.200px;background:#3631a8"></div>
<div class="a b2" style="top:40.600px;background:#2b9c93"></div>
<div class="a b2" style="top:52px;background:#4ba72f"></div>
<div class="a tt" style="left:59.8px;top:20.750px;font-weight:700;font-size:3.55px">1 Akapit - Wstęp</div>
<div class="a tt" style="left:59.8px;top:30.300px"><b>Teza</b> (jasne stanowisko wobec tematu – zgadzam<br>się / nie zgadzam się / częściowo zgadzam się).</div>
<div class="a tt" style="left:59.8px;top:41.700px">Krótkie wprowadzenie w temat (np. ogólna<br>refleksja, zdanie o problemie).</div>
<div class="a tt" style="left:59.8px;top:53.100px">Zapowiedź argumentów („Tezę tę uzasadnię,<br>odwołując się do…”) – to porządkuje tekst.</div>
</div>

<!-- thumb 3 -->
<div class="thumb" style="top:294px;width:144.400px;height:80.400px;background:#fff;border-radius:2px">
<div class="a" style="left:0;top:0;width:47.400px;height:81px;background:linear-gradient(168deg,#12526d 0%,#0d3e55 45%,#082230 100%)"></div>
<div class="a" style="left:-11px;top:9px;width:47px;height:47px;border-radius:50%;background:rgba(60,150,180,.16)"></div>
<div class="a b3" style="top:9.400px;background:linear-gradient(#b030a4,#9a2890)"></div>
<div class="a b3" style="top:22.400px;background:linear-gradient(#5130b4,#42279a)"></div>
<div class="a b3" style="top:35.200px;background:linear-gradient(#347db4,#2b6a9c)"></div>
<div class="a b3" style="top:48.400px;background:linear-gradient(#33b482,#289c6c)"></div>
<div class="a b3" style="top:61.200px;background:linear-gradient(#55b83a,#43a02a)"></div>
<div class="a tt" style="left:59.600px;top:12.950px;font-weight:700;font-size:3.55px">2 Akapit - Pierwszy argument</div>
<div class="a tt" style="left:59.600px;top:23.900px"><b>Przykład literacki</b> (najlepiej lektura<br>obowiązkowa).</div>
<div class="a tt" style="left:59.600px;top:36.700px">Krótkie streszczenie sensu dzieła (ale tylko<br>tyle, ile potrzebne).</div>
<div class="a tt" style="left:59.600px;top:51.950px">Wyjaśnienie, jak przykład dowodzi tezy.</div>
<div class="a tt" style="left:59.600px;top:62.700px"><b>Wniosek cząstkowy</b> – zdanie końcowe:<br>„Pokazuje to, że...”</div>
</div>

<!-- thumb 4 -->
<div class="thumb" style="top:387.400px;width:144.400px;height:80.400px;background:#fff;border-radius:2px">
<div class="a" style="left:0;top:0;width:144.400px;height:17.600px;background:linear-gradient(100deg,#0a121c 0%,#0c2332 30%,#0f3348 55%,#0e2e42 80%,#0c2a3c 100%)"></div>
<div class="a b4" style="left:7.600px;top:24.600px;background:#e9743a"></div>
<div class="a b4" style="left:16.400px;top:37.600px;background:#c8c323"></div>
<div class="a b4" style="left:25px;top:50.600px;background:#5b9d23"></div>
<div class="a b4" style="left:33.600px;top:63.600px;background:#1f6f29"></div>
<div class="a ar" style="left:105.300px;top:33px;background:#f3cdc4"></div>
<div class="a ar" style="left:114.100px;top:46px;background:#dcdfc4"></div>
<div class="a ar" style="left:122.700px;top:59px;background:#c6d2c2"></div>
<div class="a tt" style="left:9.200px;top:28.450px;font-weight:700;font-size:3.55px">3 Akapit Kontekst do pierwszego argumentu</div>
<div class="a tt" style="left:18px;top:41.350px;font-size:3.55px">Może być literacki, filozoficzny, historyczny, kulturowy.</div>
<div class="a tt" style="left:26.600px;top:54.450px;font-weight:700;font-size:3.55px">Nie za długi – 3–4 zdania.</div>
<div class="a tt" style="left:35.200px;top:67.450px;font-weight:700;font-size:3.55px">Wyjaśnienie, jak wspiera powyższy argument.</div>
</div>

<!-- thumb 5 (clipped by status bar) -->
<div class="thumb" style="top:480.400px;width:144.400px;height:24.600px;background:#fff;border-radius:2px 2px 0 0">
<div class="a" style="left:0;top:0;width:47.400px;height:81px;background:linear-gradient(168deg,#12526d 0%,#0d3e55 45%,#082230 100%)"></div>
<div class="a" style="left:-11px;top:9px;width:47px;height:47px;border-radius:50%;background:rgba(60,150,180,.16)"></div>
<div class="a b3" style="top:13px;height:14px;background:linear-gradient(#b030a4,#9a2890)"></div>
<div class="a tt" style="left:59.600px;top:17.600px;font-weight:700;font-size:3.55px">4 Akapit - Drugi argument</div>
</div>

<div class="a" style="left:273.3px;top:140px;width:534px;height:300.4px;background:#000;box-shadow:0 1px 5px rgba(0,0,0,.22)"></div>
<svg style="left:273.3px;top:140px;overflow:hidden" width="534" height="300.4" viewBox="273.3 140 534 300.4">
<rect x="273" y="140" width="535" height="301" fill="#000"/>
<circle cx="310" cy="183.2" r="70.75" fill="none" stroke="#f9d5c4" stroke-width="29.3"/>
<circle cx="775.5" cy="413.5" r="75" fill="#cbe5c2"/>
<polyline fill="none" stroke="#fafafa" stroke-width="1.25" points="270.8,200.6 281.4,189.8 291.9,200.6 302.4,189.8 312.9,200.6 323.4,189.8 333.9,200.6 344.4,189.8 354.9,200.6"/>
<polyline fill="none" stroke="#fafafa" stroke-width="1.25" points="270.8,220 281.4,209.2 291.9,220 302.4,209.2 312.9,220 323.4,209.2 333.9,220 344.4,209.2 354.9,220"/>
<rect x="352.9" y="175.5" width="384.4" height="237.4" fill="#fad7c6"/>
<rect x="348.9" y="172" width="383.2" height="236.9" fill="#000" stroke="#fbfbfb" stroke-width="1.25"/>
<circle cx="349.6" cy="363.1" r="13.8" fill="#cde4c4" stroke="#f4f4f4" stroke-width="1.2"/>
<g fill="#fff" stroke="#fff" stroke-width="0.3" font-family="Liberation Sans, sans-serif" font-size="27" text-anchor="middle">
<text x="540.1" y="248.8" textLength="117.5" lengthAdjust="spacingAndGlyphs">SCHEMAT</text>
<text x="540.1" y="280.3" textLength="67.8" lengthAdjust="spacingAndGlyphs">ESEJU</text>
<text x="540.1" y="311.8" textLength="270.8" lengthAdjust="spacingAndGlyphs">ARGUMENTACYJNEGO</text>
</g>
</svg>
<div class="wbox" style="left:274.1px;top:115.5px;width:19px;height:19px;border-radius:4.6px"></div>
<svg style="left:278.2px;top:120.4px" width="10.4" height="9.4" viewBox="0 0 10.4 9.4" fill="none" stroke="#4e4e4e" stroke-width="0.75"><ellipse cx="3.9" cy="4.4" rx="3.1" ry="3.8" transform="rotate(18 3.9 4.4)"/><ellipse cx="6.5" cy="5" rx="3.1" ry="3.8" transform="rotate(18 6.5 5)"/></svg>

<!-- accessibility icon -->
<svg style="left:96px;top:507.400px" width="9" height="9.400" viewBox="0 0 18 18.800" fill="none" stroke="#6e6e6e" stroke-width="1.300" stroke-linecap="round" stroke-linejoin="round"><circle cx="8" cy="2.400" r="1.700"/><path d="M1.400 6.200c4 1.400 9 1.400 13.200 0M8 7.200v4.600M8 11.800L4.800 17.600M8 11.800l1.800 3"/><path d="M11.400 15.400l2 2.200 3.800-4.600"/></svg>
<!-- notes icon -->
<svg style="left:549.600px;top:507.800px" width="9" height="8.200" viewBox="0 0 18 16.400"><path d="M9 0.400l3.200 3.400H5.800z" fill="#8a8a8a"/><path d="M0.600 6.400h16.800M0.600 10h16.800M0.600 13.600h11" stroke="#8a8a8a" stroke-width="1.700"/></svg>
<!-- comments icon -->
<svg style="left:599.700px;top:508.700px" width="8.600" height="7.400" viewBox="0 0 17.200 14.800"><path d="M1.600 0.400h14c.7 0 1.200.5 1.200 1.200v7.800c0 .7-.5 1.200-1.200 1.200H8.200L4.600 14.200v-3.600h-3C.9 10.600.4 10.100.4 9.400V1.600C.4.900.9.400 1.600.4z" fill="#5e5e5e"/></svg>
<!-- selected normal view -->
<div class="a" style="left:661px;top:505px;width:22.500px;height:14px;background:#aaaaaa"></div>
<svg style="left:667.600px;top:508.300px" width="9.400" height="7.600" viewBox="0 0 18.800 15.200"><rect x="0.800" y="0.800" width="17.200" height="13.600" fill="none" stroke="#fff" stroke-width="1.600"/><rect x="1" y="1" width="4.200" height="13.200" fill="#fff"/><rect x="8" y="4" width="7.600" height="5" fill="none" stroke="#fff" stroke-width="1.200"/><path d="M7.600 11.800h8.400" stroke="#fff" stroke-width="1.200"/></svg>
<!-- grid view -->
<svg style="left:689.500px;top:508.500px" width="10" height="7.400" viewBox="0 0 20 14.800" fill="#4e4e4e"><rect x="0" y="0" width="8.400" height="5.600" rx="0.800"/><rect x="11.600" y="0" width="8.400" height="5.600" rx="0.800"/><rect x="0" y="9.200" width="8.400" height="5.600" rx="0.800"/><rect x="11.600" y="9.200" width="8.400" height="5.600" rx="0.800"/></svg>
<!-- reading view -->
<svg style="left:712px;top:508.200px" width="9.800" height="7.800" viewBox="0 0 19.600 15.600" fill="none" stroke="#7c7c7c" stroke-width="1.400"><path d="M0.800 1.200h7c1.200 0 2 .8 2 2 0-1.200.8-2 2-2h7v12.400h-7c-1.200 0-2 .6-2 1.400 0-.8-.8-1.400-2-1.400h-7z"/><path d="M9.800 3v11.600"/><path d="M4 1.600v11.600M15.600 1.600v11.600" stroke-width="1"/></svg>
<!-- slideshow -->
<svg style="left:735.400px;top:508.200px" width="8.800" height="8" viewBox="0 0 17.600 16" fill="none" stroke="#7c7c7c" stroke-width="1.400"><path d="M0.400 1h16.800"/><rect x="1.600" y="1.200" width="14.400" height="8.200"/><path d="M5 5.200h7.600" stroke-width="1.200"/><path d="M8.800 9.600v2.400M5.600 15.200l3.200-3.200 3.200 3.200"/></svg>
<!-- zoom slider -->
<div class="a" style="left:755.800px;top:511.500px;width:4.800px;height:1.400px;background:#666"></div>
<div class="a" style="left:765px;top:511.200px;width:62.300px;height:2px;border-radius:1px;background:#aeaeae"></div>
<div class="a" style="left:788px;top:507.300px;width:9.800px;height:9.800px;border-radius:50%;background:#fdfdfd;box-shadow:0 0.300px 1.200px rgba(0,0,0,.45),0 0 0 0.300px rgba(0,0,0,.12)"></div>
<div class="a" style="left:831.700px;top:511.500px;width:5.200px;height:1.400px;background:#666"></div>
<div class="a" style="left:833.600px;top:509.600px;width:1.400px;height:5.200px;background:#666"></div>
<!-- fit to window -->
<svg style="left:876.600px;top:508.200px" width="8.400" height="8" viewBox="0 0 16.800 16" fill="none" stroke="#7c7c7c"><rect x="0.700" y="0.700" width="15.400" height="14.600" stroke-width="1.300"/><path d="M3 3l3.400 3.400M13.800 3l-3.400 3.400M3 13l3.400-3.400M13.800 13l-3.400-3.400" stroke-width="1.500"/><path d="M2.600 5V2.600H5M11.800 2.600h2.400V5M2.600 11v2.400H5M11.800 13.400h2.400V11" stroke-width="1" fill="#7c7c7c"/></svg>
<!-- welcome-back callout -->
<svg style="left:793.400px;top:456.100px" width="105" height="24" viewBox="0 0 105 24"><path d="M3.800 1.200h89.600l9.800 10.400-9.800 10.400H3.800c-1.500 0-2.600-1.100-2.600-2.600V3.800c0-1.500 1.100-2.600 2.600-2.600z" fill="#ffffff" stroke="#d6d6d6" stroke-width="0.700" style="filter:drop-shadow(0 0.400px 0.800px rgba(0,0,0,.12))"/><path d="M7.800 6.200h6.600v10.600l-3.300-2.600-3.300 2.600z" fill="#3b8ee8"/></svg>

<div class="a" id="dock"></div>
<svg width="0" height="0" style="left:0;top:0"><defs>
<linearGradient id="gFinderL" x1="0" y1="0" x2="0" y2="1"><stop offset="0" stop-color="#1fa4f8"/><stop offset="1" stop-color="#1a6de0"/></linearGradient>
<linearGradient id="gFinderR" x1="0" y1="0" x2="0" y2="1"><stop offset="0" stop-color="#f1f5f9"/><stop offset="1" stop-color="#cfdbe8"/></linearGradient>
<linearGradient id="gGreen" x1="0" y1="0" x2="0" y2="1"><stop offset="0" stop-color="#62e56e"/><stop offset="1" stop-color="#27c13c"/></linearGradient>
<linearGradient id="gMail" x1="0" y1="0" x2="0" y2="1"><stop offset="0" stop-color="#1c80f2"/><stop offset="1" stop-color="#37c2fb"/></linearGradient>
<linearGradient id="gSafari" x1="0" y1="0" x2="0" y2="1"><stop offset="0" stop-color="#24a0f5"/><stop offset="1" stop-color="#1a6ae0"/></linearGradient>
<linearGradient id="gMusic" x1="0" y1="0" x2="0" y2="1"><stop offset="0" stop-color="#fb5c74"/><stop offset="1" stop-color="#f9233b"/></linearGradient>
<linearGradient id="gPages" x1="0" y1="0" x2="0" y2="1"><stop offset="0" stop-color="#ffb52e"/><stop offset="1" stop-color="#fa8a14"/></linearGradient>
<linearGradient id="gStore" x1="0" y1="0" x2="0" y2="1"><stop offset="0" stop-color="#1fb2fa"/><stop offset="1" stop-color="#1b6bea"/></linearGradient>
<linearGradient id="gSet" x1="0" y1="0" x2="0" y2="1"><stop offset="0" stop-color="#dfe3e4"/><stop offset="1" stop-color="#8f9698"/></linearGradient>
<linearGradient id="gCont" x1="0" y1="0" x2="0" y2="1"><stop offset="0" stop-color="#b48a4e"/><stop offset="1" stop-color="#9a7238"/></linearGradient>
<linearGradient id="gNotes" x1="0" y1="0" x2="0" y2="1"><stop offset="0" stop-color="#fffdf5"/><stop offset="1" stop-color="#ebe6da"/></linearGradient>
<linearGradient id="gTrash" x1="0" y1="0" x2="1" y2="0"><stop offset="0" stop-color="#c9c5c8"/><stop offset=".35" stop-color="#f3f1f3"/><stop offset=".7" stop-color="#dedadd"/><stop offset="1" stop-color="#b9b3b7"/></linearGradient>
<linearGradient id="gPrev" x1="0" y1="0" x2="0" y2="1"><stop offset="0" stop-color="#86a8e8"/><stop offset=".55" stop-color="#b9cdf0"/><stop offset=".6" stop-color="#2f5fa8"/><stop offset=".8" stop-color="#dfe7ee"/><stop offset="1" stop-color="#7aa0c8"/></linearGradient>
<clipPath id="cIcon"><rect x="0.5" y="0.5" width="47" height="47" rx="10.5"/></clipPath>
</defs></svg>
<svg style="left:32.8px;top:526.3px;" width="24.4" height="24.4" viewBox="0 0 48 48"><g clip-path="url(#cIcon)"><rect width="48" height="48" fill="url(#gFinderR)"/><path d="M0 0h27c-3.500 7-5.500 15-5.800 24h5.600c.3 8 1.200 16 3 24H0z" fill="url(#gFinderL)"/></g><path d="M13 14v5M35 14v5" stroke="#1d2a3a" stroke-width="2.200" stroke-linecap="round"/><path d="M9.500 31c8 7 21 7 29 0" fill="none" stroke="#1d2a3a" stroke-width="2.200" stroke-linecap="round"/></svg>
<svg style="left:65.3px;top:526.3px;" width="24.4" height="24.4" viewBox="0 0 48 48"><rect x="0.5" y="0.5" width="47" height="47" rx="10.5" fill="#dcd4d4" /><rect x="8.5" y="8.5" width="8.600" height="8.600" rx="2.200" fill="#34d13c"/><rect x="19.8" y="8.5" width="8.600" height="8.600" rx="2.200" fill="#ffc400"/><rect x="31.1" y="8.5" width="8.600" height="8.600" rx="2.200" fill="#ff9500"/><rect x="8.5" y="19.8" width="8.600" height="8.600" rx="2.200" fill="#f5231c"/><rect x="19.8" y="19.8" width="8.600" height="8.600" rx="2.200" fill="#a8acb2"/><rect x="31.1" y="19.8" width="8.600" height="8.600" rx="2.200" fill="#ff4070"/><rect x="8.5" y="31.1" width="8.600" height="8.600" rx="2.200" fill="#a650e8"/><rect x="19.8" y="31.1" width="8.600" height="8.600" rx="2.200" fill="#1c9cf8"/><rect x="31.1" y="31.1" width="8.600" height="8.600" rx="2.200" fill="#22d0b0"/></svg>
<svg style="left:97.8px;top:526.3px;" width="24.4" height="24.4" viewBox="0 0 48 48"><rect x="0.5" y="0.5" width="47" height="47" rx="10.5" fill="#fbfbfb" /><circle cx="24" cy="24" r="19.500" fill="url(#gSafari)"/><circle cx="24" cy="24" r="17" fill="none" stroke="#fff" stroke-opacity=".35" stroke-width="2" stroke-dasharray="0.800 1.800"/><path d="M37.500 10.500L21.300 21.300l5.400 5.400z" fill="#f8453e"/><path d="M10.500 37.500l10.800-16.200 5.400 5.400z" fill="#f4f4f4"/></svg>
<svg style="left:130.3px;top:526.3px;" width="24.4" height="24.4" viewBox="0 0 48 48"><rect x="0.5" y="0.5" width="47" height="47" rx="10.5" fill="url(#gGreen)" /><ellipse cx="24" cy="22.500" rx="16" ry="13" fill="#f6fff6"/><path d="M13 31c0 4-2 6.500-4.500 8 4.500.3 8.500-1.500 11-5z" fill="#f6fff6"/></svg>
<svg style="left:162.8px;top:526.3px;" width="24.4" height="24.4" viewBox="0 0 48 48"><rect x="0.5" y="0.5" width="47" height="47" rx="10.5" fill="url(#gMail)" /><rect x="7" y="13" width="34" height="23" rx="3" fill="#f4f6f8"/><path d="M8 14.500l16 13 16-13" fill="none" stroke="#b9c4d0" stroke-width="1.600"/><path d="M8 35l11.500-10.500M40 35L28.500 24.500" stroke="#cdd6df" stroke-width="1.300"/></svg>
<svg style="left:195.3px;top:526.3px;" width="24.4" height="24.4" viewBox="0 0 48 48"><g clip-path="url(#cIcon)"><rect width="48" height="48" fill="#63d26a"/><path d="M0 22l48 18v8H0z" fill="#f2f2ee"/><path d="M0 30l14 18H0z" fill="#f490c8"/><path d="M26 48l8-12 14 6v6z" fill="#ffd21e"/><circle cx="44" cy="6" r="13" fill="#e9eee9" /><circle cx="44" cy="6" r="8" fill="#8fdc92"/><path d="M-2 4L50 30" stroke="#fff" stroke-width="5"/><rect x="11.500" y="-2" width="14" height="52" fill="#f4f4f0"/><rect x="14.500" y="-2" width="8" height="24" fill="#2f8af5"/></g><circle cx="18.500" cy="29" r="10.500" fill="#2f8af5" stroke="#fff" stroke-width="1.600"/><path d="M18.500 22.500l5 11.500-5-2.500-5 2.500z" fill="#fff"/></svg>
<svg style="left:227.8px;top:526.3px;" width="24.4" height="24.4" viewBox="0 0 48 48"><rect x="0.5" y="0.5" width="47" height="47" rx="10.5" fill="#fdfdfd" /><ellipse cx="24" cy="13.500" rx="5.600" ry="9" fill="#f9a11b" fill-opacity=".82" transform="rotate(0 24 24)"/><ellipse cx="24" cy="13.500" rx="5.600" ry="9" fill="#f8d028" fill-opacity=".82" transform="rotate(45 24 24)"/><ellipse cx="24" cy="13.500" rx="5.600" ry="9" fill="#a5d43c" fill-opacity=".82" transform="rotate(90 24 24)"/><ellipse cx="24" cy="13.500" rx="5.600" ry="9" fill="#4fc4a0" fill-opacity=".82" transform="rotate(135 24 24)"/><ellipse cx="24" cy="13.500" rx="5.600" ry="9" fill="#4a9ff0" fill-opacity=".82" transform="rotate(180 24 24)"/><ellipse cx="24" cy="13.500" rx="5.600" ry="9" fill="#8a78e0" fill-opacity=".82" transform="rotate(225 24 24)"/><ellipse cx="24" cy="13.500" rx="5.600" ry="9" fill="#d070c8" fill-opacity=".82" transform="rotate(270 24 24)"/><ellipse cx="24" cy="13.500" rx="5.600" ry="9" fill="#f0605a" fill-opacity=".82" transform="rotate(315 24 24)"/></svg>
<svg style="left:260.3px;top:526.3px;" width="24.4" height="24.4" viewBox="0 0 48 48"><rect x="0.5" y="0.5" width="47" height="47" rx="10.5" fill="url(#gGreen)" /><rect x="7.500" y="15" width="24" height="18" rx="4.500" fill="#f4fff4"/><path d="M33.500 21.500l7-5v15l-7-5z" fill="#f4fff4"/></svg>
<svg style="left:292.8px;top:526.3px;" width="24.4" height="24.4" viewBox="0 0 48 48"><g clip-path="url(#cIcon)"><rect width="48" height="48" fill="#fbfbfb"/><rect width="48" height="14" fill="#f5453d"/></g><text x="24" y="11.500" font-family="Liberation Sans, sans-serif" font-size="9.500" font-weight="700" fill="#fff" text-anchor="middle">GRU</text><text x="24" y="40" font-family="Liberation Sans, sans-serif" font-size="27" fill="#3a3a3a" text-anchor="middle">4</text></svg>
<svg style="left:325.3px;top:526.3px;" width="24.4" height="24.4" viewBox="0 0 48 48"><rect x="40" y="8" width="7" height="9" rx="1.500" fill="#9aa4ae"/><rect x="40" y="18" width="7" height="9" rx="1.500" fill="#4a9ee8"/><rect x="40" y="28" width="7" height="8" rx="1.500" fill="#f0a030"/><rect x="40" y="36" width="7" height="6" rx="1.500" fill="#70c050"/><rect x="1" y="0.500" width="43.500" height="47" rx="7" fill="url(#gCont)"/><circle cx="22.500" cy="24" r="13" fill="#a88448" stroke="#8e6a34" stroke-width="1"/><circle cx="22.500" cy="20" r="4.800" fill="#94703a"/><path d="M13 32.500c2-5.500 17-5.500 19 0-4.500 5.500-14.500 5.500-19 0z" fill="#94703a"/></svg>
<svg style="left:357.8px;top:526.3px;" width="24.4" height="24.4" viewBox="0 0 48 48"><rect x="0.5" y="0.5" width="47" height="47" rx="10.5" fill="#fdfdfd" /><circle cx="10.500" cy="12.500" r="3.300" fill="#2f80f6"/><circle cx="10.500" cy="24" r="3.300" fill="#f5403a"/><circle cx="10.500" cy="35.500" r="3.300" fill="#f59a1e"/><path d="M18 12.500h24M18 24h24M18 35.500h24" stroke="#d2d2d4" stroke-width="1.300"/></svg>
<svg style="left:390.8px;top:526.3px;" width="24.4" height="24.4" viewBox="0 0 48 48"><g clip-path="url(#cIcon)"><rect width="48" height="48" fill="url(#gNotes)"/><rect width="48" height="12.500" fill="#fdcc16"/><path d="M0 12.500h48" stroke="#e0b000" stroke-width=".8"/><path d="M0 24h48M0 35h48" stroke="#d9d4c8" stroke-width="1"/></g></svg>
<svg style="left:423.3px;top:526.3px;" width="24.4" height="24.4" viewBox="0 0 48 48"><rect x="0.5" y="0.5" width="47" height="47" rx="10.5" fill="#fdfdfd" /><rect x="19" y="7.500" width="22.500" height="19" rx="1.500" fill="#3cc0f0"/><circle cx="17.500" cy="30.500" r="10.500" fill="#f26a3c"/><path d="M7 31c3-12 7-14 9-8s4 8 7 0 5-7 7 0 5 4 8-2" fill="none" stroke="#1b3f6e" stroke-width="3.200" stroke-linecap="round"/></svg>
<svg style="left:455.8px;top:526.3px;" width="24.4" height="24.4" viewBox="0 0 48 48"><rect x="0.5" y="0.5" width="47" height="47" rx="10.5" fill="#1c2422" /><path d="M13.800 19.200c-1.700 0-2.400 1-3.700 1-1.400 0-2.400-1-4-.9C3.800 19.400 2 21.500 2 24.600c0 3.300 2.500 7.400 4.600 7.400 1.200 0 1.700-.8 3.200-.8s1.900.8 3.200.8c1.600 0 3.100-2.600 3.700-4.300-2.500-1-2.700-4.800-.1-6-.8-1.400-1.900-2.500-2.800-2.500zM11.300 15c-1.500.2-2.900 1.800-2.700 3.500 1.500 0 2.900-1.600 2.700-3.500z" fill="#fff" transform="translate(4.500 0)"/><text x="23.500" y="31.500" font-family="Liberation Sans, sans-serif" font-size="17" font-weight="700" fill="#fff">tv</text></svg>
<svg style="left:488.3px;top:526.3px;" width="24.4" height="24.4" viewBox="0 0 48 48"><rect x="0.5" y="0.5" width="47" height="47" rx="10.5" fill="url(#gMusic)" /><path d="M18.500 13.500l16-4v20.500c0 5.500-8.500 6-8.500 1.500 0-3.500 4-4.500 6-3.500V15.500l-11 2.800v15c0 5.500-8.500 6-8.500 1.500 0-3.500 4-4.500 6-3.500z" fill="#fff"/></svg>
<svg style="left:520.8px;top:526.3px;" width="24.4" height="24.4" viewBox="0 0 48 48"><rect x="0.5" y="0.5" width="47" height="47" rx="10.5" fill="url(#gGreen)" /><rect x="8.500" y="31" width="5.500" height="9.500" rx="1" fill="#fff"/><rect x="17" y="23" width="5.500" height="17.500" rx="1" fill="#fff"/><rect x="25.500" y="9" width="5.500" height="31.500" rx="1" fill="#fff"/><rect x="34" y="17" width="5.500" height="23.500" rx="1" fill="#fff"/></svg>
<svg style="left:553.3px;top:526.3px;" width="24.4" height="24.4" viewBox="0 0 48 48"><rect x="0.5" y="0.5" width="47" height="47" rx="10.5" fill="url(#gPages)" /><path d="M9 40l3.500-9L33 10.500c2-2 5.500 1 3.500 3.200L16 35.500z" fill="#fff"/><path d="M9 40l3.500-9 3.500 4.500z" fill="#f0e8dc"/><path d="M20 41h20" stroke="#ffd9a0" stroke-width="1.800"/></svg>
<svg style="left:585.8px;top:526.3px;" width="24.4" height="24.4" viewBox="0 0 48 48"><rect x="0.5" y="0.5" width="47" height="47" rx="10.5" fill="url(#gStore)" /><path d="M24 8.500l12.500 23M21.500 15L12 31.500M8 28h16.500M30 28h10M13.500 33.500l-2 3.500" fill="none" stroke="#fff" stroke-width="3.600" stroke-linecap="round"/></svg>
<svg style="left:618.3px;top:526.3px;" width="24.4" height="24.4" viewBox="0 0 48 48"><rect x="0.5" y="0.5" width="47" height="47" rx="10.5" fill="url(#gSet)" /><circle cx="24" cy="24" r="20.500" fill="#4a4d4f"/><circle cx="24" cy="24" r="17.600" fill="#9da2a4"/><circle cx="24" cy="24" r="15.600" fill="#55595b"/><circle cx="24" cy="24" r="12.600" fill="#a4a9ab"/><circle cx="24" cy="24" r="10.800" fill="#5e6264"/><circle cx="24" cy="24" r="9" fill="#8f9496"/><path d="M24 24V9.500M24 24l12.600 7.200M24 24l-12.600 7.200" stroke="#3a3d3f" stroke-width="3"/><circle cx="24" cy="24" r="3.600" fill="#3a3d3f"/></svg>
<svg style="left:650.8px;top:526.3px;" width="24.4" height="24.4" viewBox="0 0 48 48"><rect x="0.5" y="0.5" width="47" height="47" rx="10.5" fill="#222222" /><rect x="4.4" y="4.4" width="4.900" height="4.900" fill="#f6f6f6"/><rect x="14.2" y="4.4" width="4.900" height="4.900" fill="#f6f6f6"/><rect x="24.0" y="4.4" width="4.900" height="4.900" fill="#f6f6f6"/><rect x="33.8" y="4.4" width="4.900" height="4.900" fill="#f6f6f6"/><rect x="9.3" y="9.3" width="4.900" height="4.900" fill="#f6f6f6"/><rect x="19.1" y="9.3" width="4.900" height="4.900" fill="#f6f6f6"/><rect x="28.9" y="9.3" width="4.900" height="4.900" fill="#f6f6f6"/><rect x="38.7" y="9.3" width="4.900" height="4.900" fill="#f6f6f6"/><rect x="4.4" y="14.2" width="4.900" height="4.900" fill="#f6f6f6"/><rect x="14.2" y="14.2" width="4.900" height="4.900" fill="#f6f6f6"/><rect x="24.0" y="14.2" width="4.900" height="4.900" fill="#f6f6f6"/><rect x="33.8" y="14.2" width="4.900" height="4.900" fill="#f6f6f6"/><rect x="9.3" y="19.1" width="4.900" height="4.900" fill="#f6f6f6"/><rect x="19.1" y="19.1" width="4.900" height="4.900" fill="#f6f6f6"/><rect x="28.9" y="19.1" width="4.900" height="4.900" fill="#f6f6f6"/><rect x="38.7" y="19.1" width="4.900" height="4.900" fill="#f6f6f6"/><rect x="4.4" y="24.0" width="4.900" height="4.900" fill="#f6f6f6"/><rect x="14.2" y="24.0" width="4.900" height="4.900" fill="#f6f6f6"/><rect x="24.0" y="24.0" width="4.900" height="4.900" fill="#f6f6f6"/><rect x="33.8" y="24.0" width="4.900" height="4.900" fill="#f6f6f6"/><rect x="9.3" y="28.9" width="4.900" height="4.900" fill="#f6f6f6"/><rect x="19.1" y="28.9" width="4.900" height="4.900" fill="#f6f6f6"/><rect x="28.9" y="28.9" width="4.900" height="4.900" fill="#f6f6f6"/><rect x="38.7" y="28.9" width="4.900" height="4.900" fill="#f6f6f6"/><rect x="4.4" y="33.8" width="4.900" height="4.900" fill="#f6f6f6"/><rect x="14.2" y="33.8" width="4.900" height="4.900" fill="#f6f6f6"/><rect x="24.0" y="33.8" width="4.900" height="4.900" fill="#f6f6f6"/><rect x="33.8" y="33.8" width="4.900" height="4.900" fill="#f6f6f6"/><rect x="9.3" y="38.7" width="4.900" height="4.900" fill="#f6f6f6"/><rect x="19.1" y="38.7" width="4.900" height="4.900" fill="#f6f6f6"/><rect x="28.9" y="38.7" width="4.900" height="4.900" fill="#f6f6f6"/><rect x="38.7" y="38.7" width="4.900" height="4.900" fill="#f6f6f6"/><path d="M31.500 43c.5-3.500 3.500-5.500 4-9.500-2.500 1-5 .5-5-1.500 2-4.500 5.500-11.500 11-12 5 .5 7.500 5 7 11-.5 5.500-2.500 8-2.500 12z" fill="#b98a45"/><path d="M36 22c2-2 5-2.500 6.500-1.500" stroke="#e0b870" stroke-width="1.500" fill="none"/><ellipse cx="40.500" cy="45.500" rx="9.500" ry="3.600" fill="#a87838"/><ellipse cx="40.500" cy="42" rx="6" ry="2" fill="#c99a55"/></svg>
<svg style="left:697.8px;top:526.3px;" width="24.4" height="24.4" viewBox="0 0 48 48"><rect x="0.5" y="0.5" width="47" height="47" rx="10.5" fill="#fdfdfd" /><rect x="17" y="7.500" width="23" height="33" rx="2.500" fill="#2b7cd3"/><rect x="17" y="7.500" width="23" height="8.500" fill="#41a5ee"/><rect x="17" y="16" width="23" height="8.500" fill="#2b7cd3"/><rect x="17" y="24.500" width="23" height="8" fill="#185abd"/><rect x="17" y="32.500" width="23" height="8" rx="0" fill="#103f91"/><rect x="5.500" y="14.500" width="19" height="19" rx="2" fill="#185abd"/><text x="15" y="29.500" font-family="Liberation Sans, sans-serif" font-size="14.500" font-weight="700" fill="#fff" text-anchor="middle">W</text></svg>
<svg style="left:730.3px;top:526.3px;" width="24.4" height="24.4" viewBox="0 0 48 48"><rect x="0.5" y="0.5" width="47" height="47" rx="10.5" fill="#f2f2f2" /><rect x="3.500" y="3.500" width="41" height="41" rx="8" fill="url(#gPrev)"/><path d="M24 46l3.500-15h14l3.500 15z" fill="#d9dde2" stroke="#8a8e94" stroke-width=".8"/><rect x="25.500" y="24" width="18" height="8" rx="3" fill="#1c1c1e"/><ellipse cx="34.500" cy="25" rx="8" ry="2.200" fill="#4a4a4e"/></svg>
<svg style="left:762.8px;top:526.3px;" width="24.4" height="24.4" viewBox="0 0 48 48"><rect x="0.5" y="0.5" width="47" height="47" rx="10.5" fill="#fdfdfd" /><circle cx="27" cy="24" r="15.500" fill="#ed6c47"/><path d="M27 8.500a15.500 15.500 0 0 1 15.500 15.500H27z" fill="#ff8f6b"/><path d="M11.500 24h31a15.500 15.500 0 0 1-31 0z" fill="#d35230"/><rect x="5.500" y="14.500" width="19" height="19" rx="2" fill="#c43e1c"/><text x="15" y="29.500" font-family="Liberation Sans, sans-serif" font-size="14.500" font-weight="700" fill="#fff" text-anchor="middle">P</text></svg>
<svg style="left:809.8px;top:523.5px" width="25.400" height="25" viewBox="0 0 51 50"><rect x="9" y="1" width="22" height="14" fill="#eeeeee" stroke="#d4d4d4" stroke-width=".6"/><rect x="18" y="0" width="14" height="14" fill="#f8f8f8" stroke="#d8d8d8" stroke-width=".6"/><rect x="1" y="13" width="49" height="35" fill="#f9efe2"/><path d="M0.500 47.500h50" stroke="#c9bfb2" stroke-width="1"/><path d="M10 19h14M10 22h10M10 25h12" stroke="#4a4440" stroke-width="1.300"/><path d="M10 28.500h34" stroke="#2a2624" stroke-width="2"/><path d="M12 35h8M12 38h10M12 41h9" stroke="#a8a098" stroke-width="1"/><rect x="31" y="33" width="11" height="11" rx="1" fill="#a89cf0"/><rect x="34" y="36" width="5" height="5" fill="#e8e4ff"/></svg>
<svg style="left:843.8px;top:524px" width="22.400" height="28" viewBox="0 0 45 56"><path d="M3 10h39l-4.500 41c-.4 3-3 4-6 4H13.500c-3 0-5.600-1-6-4z" fill="url(#gTrash)" fill-opacity=".92"/><ellipse cx="22.500" cy="10" rx="20" ry="6.500" fill="#ecebec" stroke="#c4c0c3" stroke-width="1"/><ellipse cx="22.500" cy="10.500" rx="16" ry="4.500" fill="#c2bcc1"/><path d="M8 10l4-6 5 3 4-6 5 5 5-4 5 8z" fill="#f4f2f4" stroke="#bab6ba" stroke-width=".8"/><circle cx="14" cy="8" r="1.500" fill="#4aa0d8"/><circle cx="28" cy="7" r="1.300" fill="#d86a4a"/><circle cx="21" cy="10" r="1.300" fill="#5ab05a"/></svg>
<div class="a" style="left:179.2px;top:523.3px;width:11.800px;height:11.800px;border-radius:50%;background:#f5413a"></div>
<span class="t" style="left:183.100px;top:525.700px;font-size:7.200px;color:#fff;font-weight:700">4</span>
<div class="a" style="left:686.9px;top:526px;width:0.700px;height:28px;background:rgba(60,40,48,.45)"></div>
<div class="a" style="left:798.7px;top:526px;width:0.700px;height:28px;background:rgba(60,40,48,.45)"></div>
<div class="dot" style="left:43.75px"></div>
<div class="dot" style="left:108.75px"></div>
<div class="dot" style="left:173.75px"></div>
<div class="dot" style="left:773.75px"></div>

<span class="t" style="left:34.20px;top:3.28px;font-size:8.5px;color:#ffffff;font-weight:700;letter-spacing:-0.163px;">PowerPoint</span>
<span class="t" style="left:93.32px;top:3.28px;font-size:8.5px;color:#ffffff;letter-spacing:0.518px;-webkit-text-stroke:0.15px #fff;">Plik</span>
<span class="t" style="left:119.00px;top:3.28px;font-size:8.5px;color:#ffffff;letter-spacing:-0.263px;-webkit-text-stroke:0.15px #fff;">Edycja</span>
<span class="t" style="left:156.70px;top:3.28px;font-size:8.5px;color:#ffffff;letter-spacing:-0.206px;-webkit-text-stroke:0.15px #fff;">Widok</span>
<span class="t" style="left:193.20px;top:3.28px;font-size:8.5px;color:#ffffff;letter-spacing:-0.300px;-webkit-text-stroke:0.15px #fff;">Wstaw</span>
<span class="t" style="left:231.20px;top:3.28px;font-size:8.5px;color:#ffffff;letter-spacing:-0.084px;-webkit-text-stroke:0.15px #fff;">Format</span>
<span class="t" style="left:270.70px;top:3.28px;font-size:8.5px;color:#ffffff;letter-spacing:-0.145px;-webkit-text-stroke:0.15px #fff;">Rozmieść</span>
<span class="t" style="left:320.20px;top:3.28px;font-size:8.5px;color:#ffffff;letter-spacing:-0.123px;-webkit-text-stroke:0.15px #fff;">Narzędzia</span>
<span class="t" style="left:370.70px;top:3.28px;font-size:8.5px;color:#ffffff;letter-spacing:-0.112px;-webkit-text-stroke:0.15px #fff;">Pokaz slajdów</span>
<span class="t" style="left:437.00px;top:3.28px;font-size:8.5px;color:#ffffff;letter-spacing:-0.376px;-webkit-text-stroke:0.15px #fff;">Okno</span>
<span class="t" style="left:470.00px;top:3.28px;font-size:8.5px;color:#ffffff;letter-spacing:-0.192px;-webkit-text-stroke:0.15px #fff;">Pomoc</span>
<span class="t" style="left:821.70px;top:3.28px;font-size:8.5px;color:#ffffff;letter-spacing:-0.073px;-webkit-text-stroke:0.15px #fff;">Czw. 4 gru</span>
<span class="t" style="left:866.20px;top:3.28px;font-size:8.5px;color:#ffffff;letter-spacing:0.305px;-webkit-text-stroke:0.15px #fff;">14:24</span>
<span class="t" style="left:57.00px;top:22.05px;font-size:7.7px;color:#555;letter-spacing:-0.096px;-webkit-text-stroke:0.12px #555;">Autozapis</span>
<span class="t" style="left:368.70px;top:21.99px;font-size:7.8px;color:#262626;letter-spacing:0.033px;-webkit-text-stroke:0.12px #262626;">esej schemat</span>
<span class="t" style="left:417.70px;top:21.99px;font-size:7.8px;color:#7e7e7e;letter-spacing:0.007px;">— Zapisano w: mój komputer Mac</span>
<span class="t" style="left:715.70px;top:22.69px;font-size:8px;color:#727272;letter-spacing:0.072px;-webkit-text-stroke:0.12px #727272;">Wyszukaj (Cmd + Ctrl + U)</span>
<span class="t" style="left:7.30px;top:40.43px;font-size:8.5px;color:#1f1f1f;font-weight:700;letter-spacing:0.025px;">Narzędzia główne</span>
<span class="t" style="left:94.00px;top:40.43px;font-size:8.5px;color:#262626;letter-spacing:0.000px;-webkit-text-stroke:0.18px #262626;">Wstaw</span>
<span class="t" style="left:135.30px;top:40.43px;font-size:8.5px;color:#262626;letter-spacing:-0.072px;-webkit-text-stroke:0.18px #262626;">Rysowanie</span>
<span class="t" style="left:193.60px;top:40.43px;font-size:8.5px;color:#262626;letter-spacing:0.084px;-webkit-text-stroke:0.18px #262626;">Projektowanie</span>
<span class="t" style="left:264.20px;top:40.43px;font-size:8.5px;color:#262626;letter-spacing:0.039px;-webkit-text-stroke:0.18px #262626;">Przejścia</span>
<span class="t" style="left:314.50px;top:40.43px;font-size:8.5px;color:#262626;letter-spacing:0.004px;-webkit-text-stroke:0.18px #262626;">Animacje</span>
<span class="t" style="left:366.50px;top:40.43px;font-size:8.5px;color:#262626;letter-spacing:-0.012px;-webkit-text-stroke:0.18px #262626;">Pokaz slajdów</span>
<span class="t" style="left:437.00px;top:40.43px;font-size:8.5px;color:#262626;letter-spacing:0.091px;-webkit-text-stroke:0.18px #262626;">Nagraj</span>
<span class="t" style="left:477.50px;top:40.43px;font-size:8.5px;color:#262626;letter-spacing:-0.062px;-webkit-text-stroke:0.18px #262626;">Recenzja</span>
<span class="t" style="left:528.00px;top:40.43px;font-size:8.5px;color:#262626;letter-spacing:0.019px;-webkit-text-stroke:0.18px #262626;">Widok</span>
<span class="t" style="left:706.70px;top:41.88px;font-size:8.4px;color:#1c1c1c;letter-spacing:-0.174px;-webkit-text-stroke:0.2px #1c1c1c;">Nagraj</span>
<span class="t" style="left:762.00px;top:41.88px;font-size:8.4px;color:#1c1c1c;letter-spacing:-0.017px;-webkit-text-stroke:0.2px #1c1c1c;">Komentarze</span>
<span class="t" style="left:838.20px;top:41.83px;font-size:8.5px;color:#ffffff;letter-spacing:0.125px;-webkit-text-stroke:0.1px #fff;">Udostępnij</span>
<span class="t" style="left:13.00px;top:82.61px;font-size:6.8px;color:#8f8f8f;letter-spacing:-0.031px;">Wklej</span>
<span class="t" style="left:78.20px;top:82.56px;font-size:6.9px;color:#262626;letter-spacing:-0.145px;-webkit-text-stroke:0.22px #262626;">Nowy</span>
<span class="t" style="left:79.50px;top:90.06px;font-size:6.9px;color:#262626;letter-spacing:0.007px;-webkit-text-stroke:0.22px #262626;">slajd</span>
<span class="t" style="left:118.70px;top:61.06px;font-size:6.9px;color:#262626;letter-spacing:0.169px;-webkit-text-stroke:0.22px #262626;">Układ</span>
<span class="t" style="left:118.70px;top:74.56px;font-size:6.9px;color:#262626;letter-spacing:-0.063px;-webkit-text-stroke:0.22px #262626;">Resetuj</span>
<span class="t" style="left:118.70px;top:88.56px;font-size:6.9px;color:#262626;letter-spacing:-0.138px;-webkit-text-stroke:0.22px #262626;">Sekcja</span>
<span class="t" style="left:538.00px;top:82.61px;font-size:6.8px;color:#8f8f8f;letter-spacing:0.092px;">Konwertuj na</span>
<span class="t" style="left:533.00px;top:90.11px;font-size:6.8px;color:#8f8f8f;letter-spacing:0.139px;">grafikę SmartArt</span>
<span class="t" style="left:603.70px;top:82.56px;font-size:6.9px;color:#262626;letter-spacing:0.009px;-webkit-text-stroke:0.22px #262626;">Obraz</span>
<span class="t" style="left:667.00px;top:82.56px;font-size:6.9px;color:#262626;letter-spacing:-0.036px;-webkit-text-stroke:0.22px #262626;">Rozmieść</span>
<span class="t" style="left:702.00px;top:82.61px;font-size:6.8px;color:#8f8f8f;letter-spacing:0.148px;">Szybkie</span>
<span class="t" style="left:707.00px;top:90.11px;font-size:6.8px;color:#8f8f8f;letter-spacing:0.179px;">style</span>
<span class="t" style="left:768.00px;top:82.56px;font-size:6.9px;color:#262626;letter-spacing:0.054px;-webkit-text-stroke:0.22px #262626;">Dodatki</span>
<span class="t" style="left:808.00px;top:82.56px;font-size:6.9px;color:#262626;letter-spacing:0.052px;-webkit-text-stroke:0.22px #262626;">Projektant</span>
<span class="t" style="left:844.20px;top:82.56px;font-size:6.9px;color:#262626;letter-spacing:0.091px;-webkit-text-stroke:0.22px #262626;">Copilot</span>
<span class="t" style="left:167.11px;top:83.59px;font-size:8px;color:#c2c2c2;font-weight:700;letter-spacing:-0.490px;">B</span>
<span class="t" style="left:184.46px;top:83.28px;font-size:8.6px;color:#bdbdbd;letter-spacing:0.523px;font-style:italic;font-family:'Liberation Serif',serif;">I</span>
<span class="t" style="left:198.91px;top:83.59px;font-size:8px;color:#bdbdbd;letter-spacing:-0.490px;text-decoration:underline;">U</span>
<span class="t" style="left:213.50px;top:84.09px;font-size:8px;color:#c4c4c4;letter-spacing:0.094px;text-decoration:line-through;">ab</span>
<span class="t" style="left:232.00px;top:83.97px;font-size:9px;color:#bdbdbd;letter-spacing:0.000px;">x</span>
<span class="t" style="left:237.00px;top:83.31px;font-size:4.5px;color:#9cc3e6;letter-spacing:-0.016px;">2</span>
<span class="t" style="left:248.70px;top:83.97px;font-size:9px;color:#bdbdbd;letter-spacing:-0.500px;">x</span>
<span class="t" style="left:253.00px;top:88.81px;font-size:4.5px;color:#9cc3e6;letter-spacing:-0.016px;">2</span>
<span class="t" style="left:262.29px;top:82.75px;font-size:7.5px;color:#b9b9b9;letter-spacing:0.462px;">AV</span>
<span class="t" style="left:286.20px;top:83.73px;font-size:8.7px;color:#bdbdbd;letter-spacing:0.359px;">Aa</span>
<span class="t" style="left:345.00px;top:81.96px;font-size:9.4px;color:#bdbdbd;letter-spacing:-0.266px;">A</span>
<span class="t" style="left:308.70px;top:61.93px;font-size:11.2px;color:#bdbdbd;letter-spacing:-0.169px;">A</span>
<span class="t" style="left:325.90px;top:63.46px;font-size:9.4px;color:#bdbdbd;letter-spacing:-0.266px;">A</span>
<span class="t" style="left:349.60px;top:61.93px;font-size:11.2px;color:#bdbdbd;letter-spacing:-0.469px;">A</span>
<span class="t" style="left:6.50px;top:108.08px;font-size:8.6px;color:#4a4a4a;letter-spacing:-0.081px;">1</span>
<span class="t" style="left:6.50px;top:201.08px;font-size:8.6px;color:#4a4a4a;letter-spacing:-0.081px;">2</span>
<span class="t" style="left:6.50px;top:294.08px;font-size:8.6px;color:#4a4a4a;letter-spacing:-0.081px;">3</span>
<span class="t" style="left:6.50px;top:387.08px;font-size:8.6px;color:#4a4a4a;letter-spacing:-0.081px;">4</span>
<span class="t" style="left:6.50px;top:480.08px;font-size:8.6px;color:#4a4a4a;letter-spacing:-0.081px;">5</span>
<span class="t" style="left:185.00px;top:487.14px;font-size:8.1px;color:#222;letter-spacing:-0.004px;">Kliknij, aby dodać notatki</span>
<span class="t" style="left:15.00px;top:509.09px;font-size:7.8px;color:#5e5e5e;letter-spacing:-0.142px;">Slajd 1 z 7</span>
<span class="t" style="left:63.30px;top:509.09px;font-size:7.8px;color:#5e5e5e;letter-spacing:0.078px;">Polski</span>
<span class="t" style="left:109.00px;top:509.09px;font-size:7.8px;color:#5e5e5e;letter-spacing:0.098px;">Ułatwienia dostępu: dobrze przygotowane</span>
<span class="t" style="left:562.20px;top:509.09px;font-size:7.8px;color:#5e5e5e;letter-spacing:0.070px;">Notatki</span>
<span class="t" style="left:611.80px;top:509.09px;font-size:7.8px;color:#5e5e5e;letter-spacing:0.017px;">Komentarze</span>
<span class="t" style="left:847.80px;top:509.09px;font-size:7.8px;color:#5e5e5e;letter-spacing:0.295px;">90%</span>
<span class="t" style="left:813.30px;top:463.73px;font-size:8.3px;color:#222;letter-spacing:0.194px;-webkit-text-stroke:0.3px #222;">Witamy ponownie!</span>
</body>
</html>
